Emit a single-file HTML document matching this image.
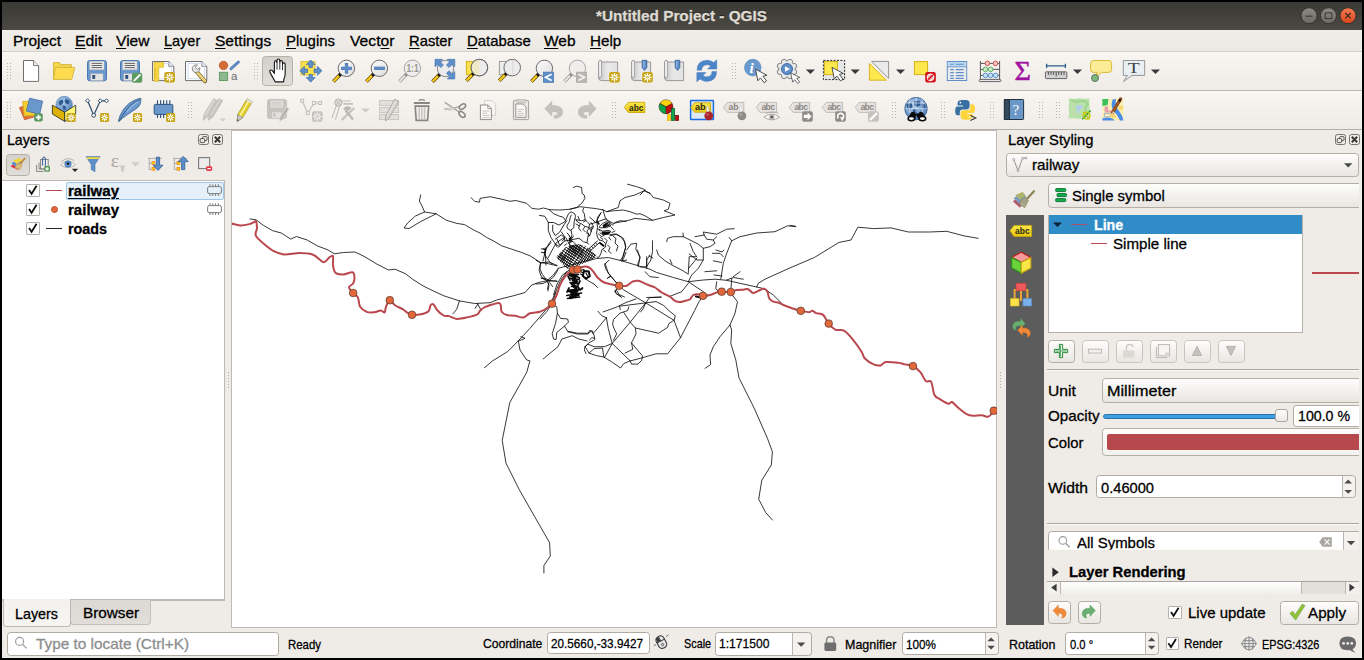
<!DOCTYPE html>
<html><head><meta charset="utf-8"><title>QGIS</title>
<style>
html,body{margin:0;padding:0}
body{width:1364px;height:660px;background:#000;position:relative;overflow:hidden;font-family:"Liberation Sans",sans-serif}
.a{position:absolute;box-sizing:border-box}
.t{position:absolute;white-space:pre;transform-origin:0 0;display:inline-block;-webkit-text-stroke:0.28px currentColor}
.t u{text-decoration:underline;text-underline-offset:1.6px;text-decoration-thickness:1.4px}
svg{position:absolute;overflow:visible}
.btn{border:1px solid #b3aea6;border-radius:3.5px;background:linear-gradient(#fdfdfc,#f1efec 60%,#e9e6e2)}
.inp{border:1px solid #b0aba3;border-radius:3.5px;background:#fff}
.cb{border:1px solid #b7b3ac;background:#fff;border-radius:1px}
.hd{width:3px;background-image:radial-gradient(circle,#b9b5ae 0.7px,transparent 0.9px);background-size:3px 3px}

</style></head>
<body>
<!-- window -->
<div class="a" style="left:2px;top:2px;width:1360px;height:656px;background:#efebe7"></div>
<!-- title bar -->
<div class="a" style="left:2px;top:2px;width:1360px;height:28px;background:linear-gradient(#3b3a36,#403f3a 40%,#4c4a44)"></div>
<svg style="left:1298px;top:5px" width="62" height="22" viewBox="0 0 62 22">
 <defs><linearGradient id="gb" x1="0" y1="0" x2="0" y2="1"><stop offset="0" stop-color="#8c8a82"/><stop offset="1" stop-color="#6b6962"/></linearGradient>
 <linearGradient id="gr" x1="0" y1="0" x2="0" y2="1"><stop offset="0" stop-color="#f37b52"/><stop offset="1" stop-color="#d9451b"/></linearGradient></defs>
 <circle cx="11" cy="10.7" r="8" fill="url(#gb)" stroke="#33322e" stroke-width="1"/>
 <circle cx="30.5" cy="10.7" r="8" fill="url(#gb)" stroke="#33322e" stroke-width="1"/>
 <circle cx="50" cy="10.7" r="8" fill="url(#gr)" stroke="#33322e" stroke-width="1"/>
 <path d="M7.6 11.2h6.8" stroke="#3a3934" stroke-width="1.1"/>
 <rect x="27.2" y="7.9" width="6.6" height="5.6" fill="none" stroke="#3a3934" stroke-width="1"/>
 <path d="M47.3 8l5.4 5.4M52.7 8l-5.4 5.4" stroke="#3a2a24" stroke-width="1.2"/>
</svg>
<!-- menubar -->
<div class="a" style="left:2px;top:30px;width:1360px;height:22px;background:linear-gradient(#f1eeea,#ece8e3);border-bottom:1px solid #d3cec7"></div>
<!-- toolbars -->
<div class="a" style="left:2px;top:52px;width:1360px;height:39px;background:linear-gradient(#f9f6f3,#f7f4f0 15%,#efece8);border-bottom:1px solid #bcb7b0"></div>
<div class="a" style="left:2px;top:91px;width:1360px;height:38px;background:linear-gradient(#f9f6f3,#f7f4f0 15%,#efece8)"></div>
<div class="a" style="left:2px;top:129px;width:1360px;height:1px;background:#b4afa8"></div>
<!-- toolbar handles -->
<div class="a hd" style="left:6px;top:62px;height:18px;width:6px"></div>
<div class="a hd" style="left:253px;top:62px;height:18px;width:6px"></div>
<div class="a hd" style="left:731px;top:62px;height:18px;width:6px"></div>
<div class="a hd" style="left:6px;top:101px;height:18px;width:6px"></div>
<div class="a hd" style="left:187px;top:101px;height:18px;width:6px"></div>
<div class="a hd" style="left:611px;top:101px;height:18px;width:6px"></div>
<div class="a hd" style="left:891px;top:101px;height:18px;width:6px"></div>
<div class="a hd" style="left:940px;top:101px;height:18px;width:6px"></div>
<div class="a hd" style="left:989px;top:101px;height:18px;width:6px"></div>
<div class="a hd" style="left:1038px;top:101px;height:18px;width:6px"></div>
<div class="a hd" style="left:1055px;top:101px;height:18px;width:6px"></div>
<!-- pressed pan button -->
<div class="a" style="left:262px;top:56px;width:31px;height:30px;border:1px solid #b5b0a8;border-radius:3.5px;background:linear-gradient(#d4d0cb,#e1deda)"></div>

<!-- LAYERS PANEL -->
<div class="a btn" style="left:198px;top:134px;width:11px;height:11px;border-color:#77746e;border-radius:2.5px;background:#efebe7"></div>
<div class="a btn" style="left:212px;top:134px;width:11px;height:11px;border-color:#77746e;border-radius:2.5px;background:#efebe7"></div>
<div class="a" style="left:6px;top:153.5px;width:24px;height:22px;border:1px solid #b5b0a8;border-radius:3.5px;background:linear-gradient(#d4d0cb,#e1deda)"></div>
<div class="a" style="left:2px;top:180px;width:223px;height:419.5px;background:#fff;border:1px solid #bdb8b1;border-left:none"></div>
<div class="a" style="left:65.5px;top:181.5px;width:158.5px;height:18px;background:#e4f0fa;border:1px solid #9fc6e6;border-radius:2px"></div>
<div class="a cb" style="left:26px;top:183.5px;width:13.5px;height:13px"></div>
<div class="a cb" style="left:26px;top:202.5px;width:13.5px;height:13px"></div>
<div class="a cb" style="left:26px;top:221.5px;width:13.5px;height:13px"></div>
<div class="a" style="left:46px;top:189.5px;width:16px;height:1.9px;background:#b8484e"></div>
<div class="a" style="left:50.5px;top:205.5px;width:7px;height:7px;border-radius:50%;background:#e2673c;border:0.6px solid #b5502c"></div>
<div class="a" style="left:46px;top:228.1px;width:16px;height:1.2px;background:#222"></div>
<!-- tabs -->
<div class="a" style="left:2px;top:599.5px;width:223px;height:1px;background:#bdb8b1"></div>
<div class="a" style="left:70px;top:600px;width:81px;height:24.5px;background:linear-gradient(#dcd8d3,#e1ddd8);border:1px solid #c3beb7;border-top:none;border-radius:0 0 4px 4px"></div>
<div class="a" style="left:2.5px;top:599px;width:68.5px;height:28px;background:linear-gradient(#f3f1ee,#f7f5f2);border:1px solid #bdb8b1;border-top:none;border-radius:0 0 4px 4px"></div>
<!-- locator -->
<div class="a inp" style="left:6.5px;top:631.5px;width:272px;height:24px"></div>

<!-- MAP CANVAS -->
<div class="a" style="left:231px;top:130px;width:766px;height:498px;background:#fff;border:1px solid #bfbab3"></div>
<div class="a hd" style="left:227.3px;top:371px;width:3px;height:18px;background-image:radial-gradient(circle,#b0aca5 0.75px,transparent 0.95px)"></div>
<div class="a hd" style="left:999.3px;top:371px;width:3px;height:18px;background-image:radial-gradient(circle,#b0aca5 0.75px,transparent 0.95px)"></div>

<!-- STATUS BAR widgets -->
<div class="a inp" style="left:546.5px;top:632.3px;width:103px;height:22.2px"></div>
<div class="a inp" style="left:715px;top:631.5px;width:96.5px;height:24px;background:linear-gradient(90deg,#fff 76px,#b9b4ad 76px,#b9b4ad 77px,#f4f2ef 77px)"></div>
<div class="a inp" style="left:901.5px;top:632px;width:97.5px;height:22.5px;background:linear-gradient(90deg,#fff 82px,#b9b4ad 82px,#b9b4ad 83px,#f4f2ef 83px)"></div>
<div class="a inp" style="left:1065px;top:632px;width:93.5px;height:22.5px;background:linear-gradient(90deg,#fff 79.5px,#b9b4ad 79.5px,#b9b4ad 80.5px,#f4f2ef 80.5px)"></div>
<div class="a cb" style="left:1165.5px;top:636.5px;width:13px;height:13px"></div>

<!-- STYLING PANEL -->
<div class="a btn" style="left:1335px;top:134px;width:11px;height:11px;border-color:#77746e;border-radius:2.5px;background:#efebe7"></div>
<div class="a btn" style="left:1349px;top:134px;width:11px;height:11px;border-color:#77746e;border-radius:2.5px;background:#efebe7"></div>
<div class="a btn" style="left:1006px;top:152.5px;width:353px;height:24px"></div>
<div class="a" style="left:1006px;top:215px;width:38px;height:409.5px;background:#5c5c5c"></div>
<!-- clipped scroll area 1047..1359 -->
<div class="a" style="left:1047px;top:180px;width:312px;height:375px;overflow:hidden">
 <div class="a btn" style="left:0.5px;top:3px;width:330px;height:24.5px"></div>
 <div class="a" style="left:0.5px;top:34.5px;width:255.5px;height:118px;background:#fff;border:1px solid #b5b0a9"></div>
 <div class="a" style="left:1.5px;top:35px;width:253.5px;height:18.7px;background:#308cc6"></div>
 <div class="a" style="left:24px;top:43.6px;width:16px;height:1.9px;background:#a8546a"></div>
 <div class="a" style="left:44px;top:62.5px;width:16px;height:1.9px;background:#b8484e"></div>
 <div class="a" style="left:265px;top:92.3px;width:47px;height:2px;background:#b8484e"></div>
 <div class="a btn" style="left:0.5px;top:159.5px;width:27px;height:23.5px"></div>
 <div class="a btn" style="left:34.5px;top:159.5px;width:27px;height:23.5px;border-color:#c9c5be"></div>
 <div class="a btn" style="left:68.5px;top:159.5px;width:27px;height:23.5px;border-color:#c9c5be"></div>
 <div class="a btn" style="left:102.5px;top:159.5px;width:27px;height:23.5px;border-color:#c9c5be"></div>
 <div class="a btn" style="left:136.5px;top:159.5px;width:27px;height:23.5px;border-color:#c9c5be"></div>
 <div class="a btn" style="left:170.5px;top:159.5px;width:27px;height:23.5px;border-color:#c9c5be"></div>
 <div class="a" style="left:0;top:189px;width:312px;height:1px;background:#aaa59e"></div>
 <div class="a" style="left:0;top:190px;width:312px;height:1px;background:#faf9f8"></div>
 <div class="a btn" style="left:54.5px;top:198.3px;width:290px;height:24.5px"></div>
 <!-- slider -->
 <div class="a" style="left:55.5px;top:233.5px;width:180px;height:5px;background:#3f9fe3;border:1px solid #2a72ab;border-radius:2.5px"></div>
 <div class="a" style="left:228px;top:229px;width:12.5px;height:12.5px;border:1px solid #aaa59e;border-radius:3px;background:linear-gradient(#fff,#eceae7)"></div>
 <div class="a inp" style="left:245.5px;top:224.5px;width:90px;height:22.5px"></div>
 <div class="a btn" style="left:54.5px;top:248.3px;width:290px;height:28px;background:linear-gradient(#fdfdfc,#f4f2ef)"></div>
 <div class="a" style="left:59.5px;top:254.4px;width:270px;height:15.5px;background:#b7494d;border-radius:2px"></div>
 <div class="a inp" style="left:48.5px;top:295.3px;width:260.5px;height:23.2px;background:linear-gradient(90deg,#fff 245px,#b9b4ad 245px,#b9b4ad 246px,#f4f2ef 246px)"></div>
 <div class="a" style="left:0;top:343px;width:312px;height:1px;background:#aaa59e"></div>
 <div class="a" style="left:0;top:344px;width:312px;height:1px;background:#faf9f8"></div>
 <div class="a inp" style="left:0.5px;top:350.5px;width:330px;height:30px;border-radius:3.5px 0 0 3.5px;clip-path:inset(0 0 10.7px 0);background:linear-gradient(90deg,#fff 293.5px,#b9b4ad 293.5px,#b9b4ad 294.5px,#f4f2ef 294.5px)"></div>
</div>
<!-- h scrollbar -->
<div class="a" style="left:1047px;top:581px;width:312px;height:13px;background:#e3e0dc"></div>
<div class="a" style="left:1047px;top:580.5px;width:312px;height:1px;background:#aaa59e"></div>
<div class="a" style="left:1060px;top:581.5px;width:241.5px;height:12.5px;background:linear-gradient(#fefefe,#f0eeeb);border-left:1px solid #bcb7b0;border-right:1px solid #bcb7b0"></div>
<div class="a" style="left:1047px;top:581.5px;width:13px;height:12.5px;background:#f3f1ee"></div>
<div class="a" style="left:1345px;top:581.5px;width:14px;height:12.5px;background:#f3f1ee;border-left:1px solid #bcb7b0"></div>
<!-- bottom buttons -->
<div class="a btn" style="left:1047.5px;top:601.3px;width:23.5px;height:22.5px"></div>
<div class="a btn" style="left:1077.5px;top:601.3px;width:23.5px;height:22.5px"></div>
<div class="a cb" style="left:1168px;top:605.5px;width:13.5px;height:13px"></div>
<div class="a btn" style="left:1279.5px;top:600.5px;width:79.5px;height:24px"></div>

<svg style="left:232px;top:131px;overflow:hidden" width="765" height="496" viewBox="232 131 765 496">
<g fill="none" stroke="#0a0a0a" stroke-width="0.82" stroke-linejoin="round" stroke-linecap="round">
<!-- west long road -->
<path d="M250 219 L255.8 219.7 L263.5 225.4 L272.5 230.6 L281.5 233.1 L290.6 239.1 L296.5 236.5 L307.3 240.1 L317.6 246 L327.9 249.9 L334.4 253.8 L343.4 252.5 L355 252 L364 256.3 L376.9 264.1 L388.5 270 L394.9 269.2 L405.3 273.6 L413 279.5 L423.3 286 L433.6 291.1 L443.9 295.8 L459.4 300.9 L474.8 303.5 L490 302.7 L496.7 300 L513.3 295.8 L525 292.5 L531.7 285 L538.3 282.5 L546.7 280.8 L553.3 275 L558.3 268.3"/>
<path d="M459.4 300.9 L456.8 309.2 L452.9 313.8 M477.4 303.5 L481.3 310.5 M478 304 L475 308.5"/>
<!-- NW road with loop -->
<path d="M420.7 195 L419.4 201 L422 206 L424.6 212 L436.2 213.8 L446.5 220.3 L456.8 223.4 L464.5 224.6 L474.8 230.6 L480 233 L486.7 237.5 L493.3 240.8 L501.7 245.8 L511.7 249.2 L521.7 252.5 L530 255.8 L536.7 260 L540.8 262.8 L546.7 263.3 L556.7 265.8"/>
<path d="M424.6 212 L415.6 215.9 L407.8 222.8 L404 228 L409.1 228.5 L420.7 221.5 L436.2 213.8"/>
<!-- north road -->
<path d="M471 197.6 L474.8 201.4 L479.5 202.2 L480 198.4 L490 196.7 L501.7 199.2 L510 201.3 L515.8 200.5 L526.7 203.3 L531.7 208.3 L538.3 209.2 L543.3 208 L550 209.7 L560 210 L570 209.2 L580 206.7 L586.7 207.5 L596.7 208.7 L603.3 210 L606.7 211.7 L613.3 209.2 L618.3 207.5 L620 200.8 L625 197.5 L635 195 L644 190.8 L650 193.3 L653.3 197.5 L663.3 200 L670 203.3 L668.3 209.2 L664.2 210.8 L675 215 L663.3 217.5 L652.5 220.3 L645 215.8 L640 213.7 L636.7 214.2 L630 211.7 L623.3 210 L613.3 210.8 L606.7 211.7"/>
<path d="M627.5 184.2 L636.7 186.7 L644 189.2 L646.7 191.7 L650 193.3 M640 195 L645 190"/>
<path d="M573.3 187.5 L576.7 186.2 L581.7 187.5 L582 193.3 L584.2 195 L585 198.3 L581.7 203.3 L576.7 207.5 L570 209.2"/>
<path d="M606.7 220 L613.3 223.3 L621.7 221.7 L630 220 L635 218.3 L645 219.5 L652.5 220.3"/>
<!-- east arcs -->
<path d="M610 235.8 L616.7 234.2 L623.3 238.3 L625.8 246.7 L623.3 255 L621.7 260.8"/>
<path d="M626.7 250 L630.8 244.2 L636.7 243.3 L635.8 249.2 L640 256.7 L638.3 266.7"/>
<path d="M650 255 L646.7 260 L646.7 268.3"/>
<!-- main E-W road through town -->
<path d="M558.3 268.3 L566.7 266 L580 262.5 L596.7 258.5 L608.3 257.5 L621.7 260.8 L638.3 265.8 L650 269.2 L656.7 272.5 L673.3 277.5 L688.3 281.7 L703.3 280 L715 279.2 L726.7 280.3 L740 283.3 L756.7 287 L764.2 288.7 L773.3 295 L781.7 303.3"/>
<path d="M756.7 287 L758.3 283.3 L765 279.2 L790 267.9 L814.4 257.5 L838.8 242.5 L851 240 L857.9 227.2 L873.6 228.6 L891 227.9 L908.4 232 L929.3 232 L946.7 231.3 L964.2 235.9 L978.1 238.3"/>
<path d="M790 225.4 L795.2 226.1"/>
<!-- NE road -->
<path d="M729.2 237.5 L731.7 240.8 L740 236.7 L756.7 233 L775 231.7 L787.5 225.8 L795.8 226.7"/>
<path d="M731.7 240.8 L726.7 253.3 L723.3 263.3 L720.8 279"/>
<path d="M666.7 241.7 L667.5 238.3 L673.3 236.7 L683.3 236.7 L690 240 L698.3 244.2 L703.3 248.3 L703.3 260 L698.3 268.3 L691.7 275 L688.3 281.7"/>
<path d="M683.3 236.7 L683 233 M695 236.7 L704.2 235 L703.3 232 L716.7 234.2 L726.7 229.2 L734.2 228.7"/>
<path d="M704.2 235 L706.7 239.2 L713.3 240 L715 243.3 L710 246.7 L703.3 248.3 M713.3 240 L716.7 236.7"/>
<path d="M690 243.3 L693.3 251.7 L696.7 256.7 L689.2 256.7 L688.3 273.3 M689.2 254 L697 260 L703 260 M689 268 L697 258"/>
<path d="M656.7 250 L658.3 255 L665 260.8 L673.3 265.8 L681.7 270 L688.3 274.2 M670 259.5 L672 264"/>
<path d="M652.5 240.8 L652.5 251.7 L650.8 260 L646.7 266.7 L640 267 M649 256 L653 258"/>
<path d="M645 271.7 L650 276.7 L658.3 277.5"/>
<path d="M712.5 253.3 L720 253.3 L723.3 256.7 M713.3 260.8 L721.7 262.5 M705 271.7 L716.7 270.8 M733.3 276.7 L740 271.7 M726.7 280 L733.3 277.5 L743.3 279.2 M716 250 L722 252 L724 250 M714 275 L722 276"/>
<path d="M716.7 281.7 L715.8 288.3 L718.3 291.7 M731.7 278.3 L730.8 291.7"/>
<!-- roads from stations going south -->
<path d="M688.3 283.3 L681.7 291.7 L670 296.3 M688.3 281.7 L703.3 291.7"/>

<path d="M730.8 293.3 L737.5 301.7 L735 313.3 L730 325 L720 336.7 L713.3 346.7 L710 355 L710.6 364.6 L705 368.4"/>
<path d="M730 325 L731.7 330 L730.8 343.3 L735.8 360 L739 377.9 L754.2 408.2 L767.5 438.5 L772.4 451.8 L771.3 465 L761.8 480.2 L758.7 499.2 L765.6 512.4 L772.4 520"/>
<path d="M646.7 297.5 L661.1 297.1"/>
<!-- big polygons S of town (retraced) -->
<path d="M619.2 285.8 L623.8 290 L645.7 302.9 L674 320.3 L680.5 337.7"/>
<path d="M604.4 357.7 L612.2 343.5 L630.2 322.2 L645.7 302.9 L649.5 297.7 L661.1 297.1"/>
<path d="M594.1 332.5 L606.4 317.7 M603.1 311.9 L610 309.5 L617.3 306.8 L626 302.5 L636 299 M619.9 306.1 L645.7 302.9 M598 311.3 L601.9 315.8 L606.4 317.7 M619.5 306.5 L620.3 309.5"/>
<path d="M606.4 317.7 L608.3 328.7 L612.2 343.5 L621 352 L630.2 360.9"/>
<path d="M628.9 306.8 L627.6 310.6 L619.9 313.2 L613.5 319.6 L612.6 324 L614.1 328.7 L616.7 333.8 L613.5 340.3"/>
<path d="M623.8 312.6 L630.2 322.2 L635.4 328 L647 330.6 L658.6 333.2 L667.6 327.4 L668.9 323.5 L674 320.3"/>
<path d="M645.7 302.9 L656 301.6 L663.7 305.5 L668.9 310.6 L675.3 315.8 L674 320.3 M645.7 302.9 L643 309 L640.5 312"/>
<path d="M635.4 328 L636 333.8 L632.8 340.3 L631.5 342.8 L632.8 349.3 L625.1 353.1"/>
<path d="M631.5 342.8 L637.9 350.6 L642.4 355.7 L641.8 360.2 L637.9 364.1 L631.5 364.1 L630.2 360.9"/>
<path d="M585.1 346.7 L589 353.1 L596.7 355.7 L603.8 357 L612.2 362.2 L620.5 368 L623.8 363.5 L630.2 360.9 L640.5 358.3 L656 353.8 L667.6 353.8 L680.5 337.7 L694.6 310.6 L699.1 301.6 L703 295.8"/>
<path d="M585.1 346.7 L587.7 344.1 L594.1 346.7 L604.4 346.7 L612.2 343.5 M589 353.1 L594.1 348.6 L602.5 348 L603.8 357 M585.1 346.7 L584.3 350 L586 353.5"/>
<path d="M553.3 305 L556.8 306.8 L557.4 313.2 L560.6 318.4 L567.7 319 L568.4 322.2 L564.5 326.1 L567.7 331.2 L577.4 333.2 L587.7 333.2 L591.5 331.2 L594.1 335.1 L594.8 339.6 L589 342.8 L585.1 346.7"/>
<path d="M557.4 313.2 L555.5 323.5 L552.2 333.8 L553.5 339 L556.1 339.6 L556.8 332.5 L564.5 326.1"/>
<path d="M543.2 358.9 L551.6 351.9 L558 346.7 L561.9 339 L572.2 335.7 L578.7 339 L587 340.9"/>
<path d="M567.7 331.8 L577.4 334 L587.7 334 M588.5 333.5 L589.5 330.5 L592.5 331 L593.5 334 M589.5 340 L592 337.5 L594.5 338.5"/>
<path d="M615 291.7 L618.3 295 L621.7 297.5 M619.2 285.8 L615 291.7 M605 263.3 L608.3 273.3 L619.2 285.8 M608 277.5 L610.5 276.5"/>
<path d="M626.7 260 L622.5 260.8 M637.5 250 L640 258 L637.5 265 M646.7 256.7 L646.7 267"/>
<path d="M616.5 290 L619 294.5 L624.5 297"/>
<!-- SW diagonal road -->
<path d="M484.4 367.7 L492.7 360.8 L507.9 351.4 L518.3 340.8 L530 328.3 L540 316.7 L550 305 L555 293.3 L560 281.7 L566.7 271.7"/>
<path d="M540 319 L546.7 311.7 L552 303.7 L556 292 M518.3 340.8 L520 350 L526.7 360 L529.9 360.8 L526.8 372.2 L509.8 402.5 L502.2 440.4 L506 463.2 L519.3 489.7 L534.4 516.2 L549.6 542.7 L550.3 556 L543.9 565.5 L543.9 573"/>
<path d="M520.8 336.7 L525 338.3 L519.2 340.8"/>
<!-- west of town small loops -->
<path d="M540.8 262.8 L539 270 L541 276 L546.7 280.8 M546.7 280.8 L549 285 L548 291 M541 278 L549 281 L556.7 281 M543.3 248.3 L545.5 250 L544 253 M545 248 L546 265 M548 258 L556 243 L565 237 M549.5 262 L552 264"/>
</g>
<g id="town" fill="none" stroke="#0a0a0a" stroke-width="0.85" stroke-linejoin="round" stroke-linecap="round">
<path d="M549.2 209.7 L553.6 213.7 L559.7 216.3 L563.2 217.2 L565 219.8"/>
<path d="M539.5 215.4 L544.8 216.3 L547.4 220.7 L548.3 222.5 L553.6 222.5 L558.8 225.1 L565 221.6 L568.5 213.7 L571.1 211.9 L574.7 213.7 L575.5 216.3 L574.2 221.6 L573.8 227.7 L570.3 230.4 L567.6 228.6 L566.8 226 L569.4 221.6 L570.3 217.2 L571.3 215"/>
<path d="M548.3 222.5 L548.3 230.4 L550.9 237.4 L554.5 242.7 L557.1 247.1"/>
<path d="M552.7 225.1 L552.7 231.2 L555.3 235.6 L559.7 232.1 L563.2 226 L566.8 220.7"/>
<path d="M550.9 240.9 L547.4 246.2 L544.8 253.2 L543 261.1 M541.3 248.8 L545.7 249.7 M541.3 252.3 L545.2 252.8"/>
<path d="M555.3 239.1 L561.5 234.8 L564.1 237.4 L565 240.9 L561.5 243.5 L558.8 247.1"/>
<path d="M565 240.9 L570.3 240 L572 234.8 L571.1 230.4"/>
<path d="M570.3 240 L574.7 239.1 L579 238.3 L583.5 241.8 L587 242.7 L588.7 244.4 M570.3 240 L569.4 245.3 L571.1 247"/>
<path d="M576.4 219.8 L581.7 220.7 L585.2 219.8 L587.8 222.5 L589.6 224.2 L588.7 228.6 L587 231.2 L588.7 233.9 L587.8 237.4 L587 242.7"/>
<path d="M583.5 208.4 L582.6 211 L584.3 213.7 L584.8 217.2 L585.2 219.8"/>
<path d="M589.6 217.2 L595.8 222.5 L601 212.8 M601 212.8 L597.5 217.2 L597 222.5 L597.5 227.7 L596.6 233 L597.5 237.4 L599.3 240"/>
<path d="M589.6 224.2 L595.8 222.5 L602.8 219.8 L606.3 218.9 M592.2 226.8 L590.5 233.9 L588.7 236.5"/>
<path d="M599.3 226.8 L602.8 223.3 L606.3 221.6 L608.9 222.5 L610.7 226 L606.3 227.7 L601 227.7 Z M603.7 225.1 L606.3 222.9"/>
<path stroke-width="1.8" d="M603.5 225.5 L607.5 223.5 M604 227 L609 225"/>
<path d="M602.8 209.3 L605.4 218 L608.9 221.6 L612.5 225.1 L615.1 222.5 L620.4 220.7 L626 221.6"/>
<path d="M599.3 229.5 L602.8 231.2 L608 230.4 L610.7 231.2 L608.9 233.9 L603.7 234.8 L600.1 233"/>
<path stroke-width="1.8" d="M602.5 232.3 L609.5 232.3 M603 233.8 L608 233.5"/>
<path d="M609.8 234.8 L615.1 233.9 L620.4 236.5 L624.8 241.8 L625.6 247.9 L623 256.7 L620.4 260.2 M608.9 237.4 L610.7 240"/>
<path d="M599.3 240 L602.8 240.9 L605.4 243.5 L605.4 247.1 L601.9 249.7 L601 253.2 L599.3 256.7 L597.5 257.6"/>
<path stroke-width="2" d="M600 243 L603.5 245.8"/>
<path d="M587.8 249.7 L597.5 240.9 M589.6 251.5 L599.3 242.7 M589.5 248.2 L591.3 250 M591.5 246.4 L593.3 248.2 M593.5 244.6 L595.3 246.4 M595.5 242.8 L597.3 244.6"/>
<path d="M575.5 219 L577.5 222 L581.7 224 L585 226.5 L583 229.5 L585.5 232 M578 216.5 L579.5 220 M580 224.5 L578.5 228 L581 231 M583.5 222 L586 220.5 M576 224 L579.5 226 M585.5 226.5 L589 227.5 L591.5 231.5 M589.5 229 L592 226.5 M586.5 233 L590 235.5 M591 222.5 L593.5 226 L592.5 229"/>
<path d="M561.5 232 L565 237.4 L562.4 241 M557 239 L559.7 245.3 L562.4 243.5 M566 238 L568.5 242.5 L572.5 241.5 M569 236 L571.8 238.6 L573.5 236 M568.5 243.5 L572 246.5 M573 241.5 L576 244.5 M567 233 L569.5 235.5 M555.5 244 L558.5 246 M564.5 245.5 L567 243.5"/>
<path stroke-width="1.6" d="M569.5 238.5 L571.5 241 M570.6 237.6 L569.6 240.6 M597.4 222 L599 224"/>
<path d="M597.8 228.5 L600 231 M598.5 234 L601.5 236.5 L604 235.5 M604.5 238 L607 240.5 L606 243.5 M611 227 L613.5 229.5 M612 232.5 L615 231 M607.5 245 L610 247.5 L608.5 251 L611 253.5 M603.5 250 L606 252 M613 236 L616 238.5 L615 243 L618 246 L616.5 251 M600.5 237.5 L603 239.5"/>
<!-- west of grid -->
<path d="M536 260.2 L540.4 262.8 L549.2 262 L557.1 265.5 M540.4 262.8 L540 269 L542.2 274.3 L545.7 278.7 L549.2 280.4 L553.6 276.9 L558 269.9"/>
<path d="M536 284 L543 283.5 L549.2 280.4 M541.3 278.2 L545.7 279.1 M549.2 280.4 L557.1 281.3 M549.2 281.3 L547.4 289.2 M550 283 L552.7 286.6"/>
<path d="M550.9 242.6 L547.4 247 L545.7 247.9 L544.8 254.9 L549.2 261.1"/>
<path d="M553.6 294.5 L557.1 284 L562.4 275.2 L569.4 269.9"/>
<path d="M608.9 260.2 L604.5 264.6 L606.3 269.9 L610.7 276 L615.1 281.3 L619 285.7 M610.7 276 L607.2 278.7"/>
<path d="M615.1 290 L616 293.6 L620.4 296.2 M626 252.3 L623.9 257.6 L622.1 261.1"/>
<path d="M585.2 278.7 L590.5 282.2 L594 284 L597.5 287.5"/>
</g>
<clipPath id="gcp"><polygon points="556.2,257 560,252.5 565.5,247.6 571,245.2 578,244.2 585.2,246 591,250.5 597.3,256.6 591,260.2 583,263.2 575,266.5 567.5,268.8 562,263.5"/></clipPath>
<g clip-path="url(#gcp)"><path fill="none" stroke="#0a0a0a" stroke-width="0.95" d="M559.6 226.2 L609.9 258.9 M558.3 228.2 L608.6 260.9 M557.0 230.2 L607.3 262.9 M555.7 232.2 L606.0 264.8 M554.4 234.1 L604.8 266.8 M553.2 236.1 L603.5 268.8 M551.9 238.1 L602.2 270.7 M550.6 240.0 L600.9 272.7 M549.3 242.0 L599.6 274.7 M548.0 244.0 L598.4 276.7 M546.8 246.0 L597.1 278.6 M545.5 247.9 L595.8 280.6 M544.2 249.9 L594.5 282.6 M542.9 251.9 L593.2 284.5 M565.1 225.1 L543.3 258.6 M566.7 226.1 L544.9 259.6 M568.3 227.1 L546.5 260.7 M569.9 228.2 L548.1 261.7 M571.5 229.2 L549.7 262.8 M573.1 230.2 L551.3 263.8 M575.7 232.0 L554.0 265.5 M578.4 233.7 L556.6 267.3 M580.0 234.8 L558.2 268.3 M581.6 235.8 L559.8 269.3 M583.2 236.8 L561.4 270.4 M584.8 237.9 L563.0 271.4 M586.4 238.9 L564.6 272.4 M589.1 240.6 L567.3 274.2 M591.8 242.4 L570.0 275.9 M593.4 243.4 L571.6 277.0 M594.9 244.5 L573.2 278.0 M596.5 245.5 L574.8 279.0 M598.1 246.5 L576.3 280.1 M599.7 247.6 L577.9 281.1 M602.4 249.3 L580.6 282.8 M605.1 251.0 L583.3 284.6 M606.7 252.1 L584.9 285.6 M608.3 253.1 L586.5 286.7"/></g>
<g clip-path="url(#gcp)"><path fill="none" stroke="#0a0a0a" stroke-width="0.8" d="M573.6 242.9 L568.7 250.5 M574.7 243.6 L569.8 251.2 M575.8 244.4 L570.9 251.9 M577.0 245.1 L572.1 252.7 M578.1 245.9 L573.2 253.4 M579.2 246.6 L574.3 254.1 M580.4 247.3 L575.5 254.9 M581.5 248.1 L576.6 255.6 M582.6 248.8 L577.7 256.3 M583.8 249.5 L578.9 257.1 M584.9 250.3 L580.0 257.8 M560.7 253.1 L557.4 258.1 M561.8 253.8 L558.5 258.8 M562.9 254.5 L559.6 259.5 M564.0 255.2 L560.7 260.2 M565.1 255.9 L561.8 260.9 M566.1 256.6 L562.9 261.6"/></g>
<!-- dark blobs south of station -->
<g fill="none" stroke="#0a0a0a" stroke-linecap="round" stroke-linejoin="round">
<path stroke-width="3.4" d="M570.5 275 L575.5 276 L573 279.5 L576.5 281.5 L572 283.5 M573.5 285.5 L576 288 M570 291 L577 290.5 L572 294 L578 294.5 L570.5 297.5"/>
<path stroke-width="1.7" d="M568.5 274 L578.5 274.5 M569 278 L579 279.5 M570 282.5 L578.5 284 M571.5 286.5 L577.5 286 L579 288.5 M567.5 291.5 L582 289 M566.8 295.5 L581.5 293 M567.5 298.5 L579.5 297 M578 285 L580 281 M569 288 L567 292 M580 290 L582.5 288 M568 276 L570 280 M577 276.5 L579.5 278"/>
<path stroke-width="2" d="M584 271 L588.8 271.5 L589.8 276.2 L586 278.7 L582.8 276 Z"/>
<path stroke-width="1.1" d="M586 273 L587.5 276 M581 270.5 L584 269.5 M578 270.5 L582.5 272.5 M580.5 274 L583 275.5"/>
</g>
<!-- railway -->
<path fill="none" stroke="#b8484e" stroke-width="2" stroke-linejoin="round" stroke-linecap="round" d="M232.0 223.6 C233.4 223.9 237.4 225.3 240.3 225.4 C243.2 225.5 246.9 224.7 249.3 224.1 C251.7 223.5 253.4 222.3 254.5 221.8 C255.6 221.3 255.6 220.2 256.0 221.2 C256.4 222.2 257.0 225.6 257.0 228.0 C257.0 230.4 254.7 233.1 255.8 235.7 C256.9 238.3 260.5 240.9 263.5 243.5 C266.5 246.1 270.4 249.4 273.8 251.2 C277.2 253.0 279.8 254.2 284.1 254.5 C288.4 254.8 294.9 253.0 299.6 253.0 C304.3 253.0 309.3 253.5 312.5 254.5 C315.7 255.5 317.0 257.6 318.9 258.9 C320.8 260.2 322.3 262.5 324.0 262.3 C325.7 262.1 327.7 258.6 329.2 257.6 C330.7 256.6 332.4 255.0 333.0 256.3 C333.6 257.6 332.6 262.6 333.0 265.4 C333.4 268.2 334.0 271.6 335.7 273.1 C337.4 274.6 340.6 274.5 343.4 274.4 C346.2 274.3 350.5 271.9 352.4 272.3 C354.2 272.7 354.4 275.1 354.5 277.0 C354.6 278.9 354.1 281.7 353.2 283.4 C352.3 285.1 349.0 285.7 349.0 287.3 C349.0 288.9 351.7 291.3 353.2 293.0 C354.7 294.7 356.9 295.3 358.0 297.6 C359.1 299.9 358.6 304.2 360.0 306.6 C361.4 309.0 364.2 310.9 366.6 311.8 C369.0 312.8 371.9 312.5 374.3 312.3 C376.7 312.1 379.1 310.5 380.8 310.5 C382.5 310.5 383.7 313.1 384.6 312.5 C385.5 311.9 385.1 308.7 386.0 306.6 C386.9 304.6 388.3 300.4 389.8 300.2 C391.3 300.0 392.9 303.8 395.0 305.3 C397.1 306.8 400.6 307.9 402.7 309.2 C404.8 310.5 406.2 312.1 407.8 313.0 C409.4 313.9 409.9 314.6 412.0 314.8 C414.1 315.0 417.9 314.9 420.7 314.3 C423.4 313.7 426.9 312.7 428.5 311.2 C430.1 309.7 429.6 306.4 430.5 305.3 C431.4 304.2 432.4 303.6 433.6 304.5 C434.8 305.4 435.8 308.6 437.5 310.5 C439.2 312.4 442.0 314.7 443.9 315.6 C445.8 316.5 446.9 315.5 449.0 316.1 C451.1 316.7 453.8 318.8 456.8 319.0 C459.8 319.2 463.7 318.2 467.1 317.4 C470.5 316.6 475.2 315.4 477.4 314.3 C479.5 313.2 478.9 311.9 480.0 310.8 C481.1 309.7 482.8 308.3 484.2 307.5 C485.6 306.7 486.8 306.4 488.3 305.8 C489.8 305.2 491.5 304.7 493.3 304.2 C495.1 303.7 497.9 302.7 499.2 303.0 C500.4 303.3 500.4 304.4 500.8 305.8 C501.2 307.2 500.7 310.2 501.7 311.7 C502.7 313.2 504.5 314.3 506.7 315.0 C508.9 315.7 512.2 315.4 515.0 315.8 C517.8 316.2 520.8 317.9 523.3 317.5 C525.8 317.1 527.2 314.3 530.0 313.3 C532.8 312.3 537.2 312.5 540.0 311.7 C542.8 310.9 544.7 309.6 546.7 308.3 C548.7 307.0 550.3 305.9 552.0 303.7 C553.7 301.5 555.4 298.1 556.7 295.0 C558.0 291.9 558.6 288.1 560.0 285.0 C561.4 281.9 563.2 279.1 565.0 276.7 C566.8 274.3 569.1 272.0 570.8 270.8 C572.5 269.6 573.2 270.4 575.3 269.7 C577.4 269.0 581.0 267.1 583.3 266.7 C585.6 266.3 587.5 266.7 589.2 267.5 C590.9 268.3 591.8 269.9 593.3 271.7 C594.8 273.5 596.5 276.5 598.3 278.3 C600.1 280.1 601.7 281.4 604.2 282.5 C606.7 283.6 610.8 284.1 613.3 284.7 C615.8 285.2 617.0 285.6 619.2 285.8 C621.4 286.0 624.5 286.5 626.7 285.8 C628.9 285.1 630.6 282.5 632.5 281.7 C634.4 280.9 635.7 280.2 638.3 280.8 C640.9 281.4 645.5 283.9 648.3 285.0 C651.1 286.1 652.8 286.2 655.0 287.5 C657.2 288.8 659.2 291.0 661.7 292.5 C664.2 294.0 667.8 295.3 670.0 296.7 C672.2 298.1 673.3 299.9 675.0 300.8 C676.7 301.7 678.3 302.0 680.0 302.0 C681.7 302.0 683.3 301.3 685.0 300.8 C686.7 300.3 688.6 300.2 690.0 299.2 C691.4 298.2 691.9 295.8 693.3 295.0 C694.7 294.2 696.7 294.1 698.3 294.2 C699.9 294.3 701.0 295.7 703.0 295.8 C705.0 295.9 707.7 295.6 710.0 295.0 C712.3 294.4 714.8 293.1 716.7 292.5 C718.7 291.9 719.4 291.8 721.7 291.7 C724.1 291.6 728.3 292.3 730.8 292.0 C733.3 291.7 734.6 290.4 736.7 290.0 C738.8 289.6 741.4 289.8 743.3 289.7 C745.2 289.6 746.6 288.6 748.3 289.2 C750.0 289.8 751.3 292.9 753.3 293.0 C755.2 293.1 758.2 290.7 760.0 290.0 C761.8 289.3 763.0 288.4 764.2 288.7 C765.5 289.0 766.7 290.1 767.5 291.7 C768.3 293.3 768.2 296.6 769.2 298.3 C770.2 300.0 771.8 301.0 773.3 301.7 C774.8 302.4 776.6 301.9 778.3 302.5 C780.0 303.1 781.3 304.2 783.3 305.0 C785.2 305.8 787.8 306.7 790.0 307.5 C792.2 308.3 794.9 309.1 796.7 309.7 C798.5 310.2 798.7 310.4 800.8 310.8 C802.9 311.2 807.2 312.2 809.2 312.2 C811.2 312.2 811.5 310.6 812.6 310.8 C813.8 311.0 814.4 312.5 816.1 313.2 C817.9 313.9 821.0 313.2 823.1 314.9 C825.2 316.6 826.7 321.2 828.7 323.6 C830.7 326.1 832.8 328.4 835.3 329.6 C837.8 330.8 841.1 329.0 844.0 330.6 C846.9 332.2 849.8 335.8 852.7 339.3 C855.6 342.8 859.4 348.3 861.4 351.5 C863.4 354.7 862.9 356.4 864.9 358.5 C866.9 360.6 871.0 363.2 873.6 364.4 C876.2 365.5 878.6 365.8 880.6 365.4 C882.6 365.0 882.9 362.4 885.8 362.0 C888.7 361.6 894.8 362.3 898.0 362.7 C901.2 363.1 902.4 363.8 904.9 364.4 C907.4 365.0 910.4 364.8 913.0 366.1 C915.6 367.4 918.5 369.9 920.6 372.4 C922.7 374.9 924.0 379.5 925.8 381.1 C927.5 382.7 929.6 379.5 931.1 381.8 C932.6 384.1 933.0 392.1 934.5 395.0 C936.0 397.9 937.5 397.7 939.8 399.2 C942.1 400.7 946.5 403.3 948.5 403.8 C950.5 404.3 950.3 401.2 952.0 402.0 C953.7 402.8 956.0 406.1 958.9 408.3 C961.8 410.5 965.6 414.1 969.4 415.3 C973.2 416.5 978.4 415.1 981.6 415.3 C984.8 415.5 986.5 417.4 988.5 416.6 C990.5 415.8 992.9 411.7 993.8 410.7"/>
<path fill="none" stroke="#111" stroke-width="2.2" stroke-linecap="round" d="M696 296.5 L701 297.5"/>
<!-- stations -->
<g fill="#e2683c" stroke="#3a2a22" stroke-width="0.6">
<circle cx="353.2" cy="293" r="3.85"/><circle cx="389.8" cy="300.2" r="3.85"/><circle cx="412" cy="314.8" r="3.85"/>
<circle cx="552" cy="303.7" r="3.85"/><circle cx="573" cy="269.8" r="3.85"/><circle cx="577.5" cy="269.4" r="3.85"/>
<circle cx="619.2" cy="285.8" r="3.85"/><circle cx="703" cy="295.8" r="3.85"/><circle cx="721.7" cy="291.7" r="3.85"/>
<circle cx="730.8" cy="292" r="3.85"/><circle cx="800.8" cy="310.8" r="3.85"/><circle cx="828.7" cy="323.6" r="3.85"/>
<circle cx="913" cy="366.1" r="3.85"/><circle cx="993.8" cy="410.7" r="3.85"/>
</g>
</svg>

<svg style="left:0;top:0" width="1364" height="660" viewBox="0 0 1364 660">
<defs>
 <linearGradient id="lens" x1="0" y1="0" x2="1" y2="1"><stop offset="0" stop-color="#fdfdfd"/><stop offset="1" stop-color="#dcdcdc"/></linearGradient>
 <linearGradient id="scr" x1="0" y1="0" x2="1" y2="0"><stop offset="0" stop-color="#c9c9c9"/><stop offset="0.5" stop-color="#e9e9e9"/><stop offset="1" stop-color="#e2e2e2"/></linearGradient>
 <linearGradient id="ylw" x1="0" y1="0" x2="0" y2="1"><stop offset="0" stop-color="#fbe84a"/><stop offset="1" stop-color="#e8c80e"/></linearGradient>
 <radialGradient id="glb" cx="0.4" cy="0.35" r="0.7"><stop offset="0" stop-color="#b4d0ee"/><stop offset="1" stop-color="#4f7fb8"/></radialGradient>
 <!-- magnifier: lens centre at (0,0) -->
 <g id="mag"><path d="M-6.2 6.2 L-13 13.2" stroke="#4a3c00" stroke-width="3.6" stroke-linecap="butt"/><path d="M-6.6 6.6 L-12.8 13" stroke="#f6c61c" stroke-width="2.4"/><circle cx="-6.3" cy="6.4" r="1.7" fill="#111"/><circle r="8.2" fill="url(#lens)" stroke="#6a6a6a" stroke-width="1"/></g>
 <g id="magG"><path d="M-6.2 6.2 L-13 13.2" stroke="#9a9a9a" stroke-width="3.4"/><path d="M-6.6 6.6 L-12.8 13" stroke="#e6e6e6" stroke-width="2"/><circle cx="-6.3" cy="6.4" r="1.6" fill="#8a8a8a"/><circle r="8.2" fill="#f0eeec" stroke="#a5a5a5" stroke-width="1"/></g>
 <!-- star badge 10.6 square at 0,0 -->
 <g id="star"><rect x="0" y="0" width="10.6" height="10.6" rx="2" fill="#c7a414"/><g stroke="#fff" stroke-width="1.3" stroke-linecap="round"><path d="M5.3 1.6V9M1.6 5.3H9M2.7 2.7l5.2 5.2M7.9 2.7l-5.2 5.2"/></g><circle cx="5.3" cy="5.3" r="1.2" fill="#c7a414"/><circle cx="5.3" cy="5.3" r="0.5" fill="#fff"/></g>
 <g id="starG"><rect x="0" y="0" width="10.6" height="10.6" rx="2" fill="#c6c2be"/><g stroke="#f3f1ef" stroke-width="1.3" stroke-linecap="round"><path d="M5.3 1.6V9M1.6 5.3H9M2.7 2.7l5.2 5.2M7.9 2.7l-5.2 5.2"/></g><circle cx="5.3" cy="5.3" r="1.2" fill="#c6c2be"/></g>
 <!-- cursor arrow tip at 0,0 -->
 <path id="cur" d="M0 0 L0.6 11.8 L3.6 9.2 L6.6 14.6 L9.2 13.2 L6.3 8 L10.4 7.6 Z" fill="#fff" stroke="#444" stroke-width="0.9" stroke-linejoin="round"/>
 <!-- dropdown arrow centered x at 0, top at 0 -->
 <path id="dd" d="M-4.6 0 H4.6 L0 4.6 Z" fill="#3a3a3a"/>
 <!-- floppy 20x21 at 0,0 -->
 <g id="flop"><rect x="0.5" y="0.5" width="19" height="20.3" rx="2.2" fill="#6b98cc" stroke="#4b79b1"/><rect x="2.6" y="1.2" width="14.4" height="8.6" fill="#ececec" stroke="#b9b9b9" stroke-width="0.5"/><path d="M4.6 3.4h10.4M4.6 5.5h10.4M4.6 7.6h10.4" stroke="#555" stroke-width="0.9"/><rect x="3.8" y="13.8" width="12.2" height="6.6" fill="#e4e4e4" stroke="#b9b9b9" stroke-width="0.5"/><rect x="5.3" y="15" width="2.9" height="3.9" fill="#2e4f7a"/></g>
 <!-- scroll (map) 20x21 -->
 <g id="scroll"><path d="M1 1.3 Q1 0.3 2.2 0.3 Q3.6 0.3 3.6 1.6 V2 H19.6 V20.6 H3.4 Q0.8 20.6 0.6 18 V2 Z" fill="url(#scr)" stroke="#8e8e8e" stroke-width="0.9"/><path d="M3.6 2 V16.8 Q3.4 17.8 1 17.4" fill="none" stroke="#8e8e8e" stroke-width="0.8"/><rect x="1.2" y="1.5" width="1.9" height="15" fill="#efefef"/></g>
 <!-- grey label tag: tip at (0,0) -->
 <g id="tagG"><path d="M0 0 L4 -5 H20.4 V5 H4 Z" fill="#e6e3e0" stroke="#bcb8b4" stroke-width="0.9"/><text x="5.2" y="3" font-family="Liberation Sans" font-weight="700" font-size="8.6" fill="#8b8783" textLength="13.6">abc</text></g>
 <g id="tagGab"><path d="M0 0 L4 -5 H20.4 V5 H4 Z" fill="#e6e3e0" stroke="#bcb8b4" stroke-width="0.9"/><text x="5.2" y="3" font-family="Liberation Sans" font-weight="700" font-size="8.6" fill="#8b8783">ab</text></g>
</defs>

<!-- ===== ROW 1 ===== -->
<!-- new -->
<path d="M23.5 60.5 H33.6 L38.6 65.6 V81.4 H23.5 Z" fill="#fff" stroke="#6e6e6e" stroke-width="1" stroke-linejoin="round"/><path d="M33.6 60.5 V65.6 H38.6" fill="#eee" stroke="#6e6e6e" stroke-width="0.9" stroke-linejoin="round"/>
<!-- open -->
<path d="M53.4 79.4 V62.6 H59.6 L60.6 64.6 H71.4 V67.4" fill="#f6d64a" stroke="#d1b43a" stroke-width="0.9"/><path d="M53.4 79.4 L55.6 67.4 H74.8 L71.8 79.4 Z" fill="#fddc4f" stroke="#d1b43a" stroke-width="0.9" stroke-linejoin="round"/>
<!-- save, save as -->
<use href="#flop" x="87" y="60"/>
<use href="#flop" x="120" y="60"/>
<rect x="132" y="72.8" width="10.2" height="10" rx="2" fill="#5b9a5e"/><path d="M134.4 80.4 L139.8 75" stroke="#fff" stroke-width="2" stroke-linecap="round"/>
<!-- new layout -->
<path d="M152.5 61.5 H168.8 L173.8 66.4 V80.6 H152.5 Z" fill="#fff" stroke="#6e6e6e" stroke-width="1" stroke-linejoin="round"/><path d="M168.8 61.5 V66.4 H173.8" fill="#eee" stroke="#6e6e6e" stroke-width="0.8"/>
<rect x="157.5" y="63.5" width="14" height="15.4" fill="none" stroke="#c9d6f2" stroke-width="0.8"/>
<path d="M154 62.4 H163.6 V67.2 H158.8 V81.2 H154 Z" fill="#f8d648" stroke="#d9b524" stroke-width="0.7"/><path d="M154.4 69.5h2.3M154.4 71.5h1.6M154.4 73.5h2.3M154.4 75.5h1.6M154.4 77.5h2.3" stroke="#c79d0c" stroke-width="0.6"/>
<use href="#star" x="164.3" y="72"/>
<!-- layout manager -->
<path d="M185.5 61.5 H201.8 L206.8 66.4 V80.6 H185.5 Z" fill="#fff" stroke="#6e6e6e" stroke-width="1" stroke-linejoin="round"/><path d="M201.8 61.5 V66.4 H206.8" fill="#eee" stroke="#6e6e6e" stroke-width="0.8"/>
<rect x="188" y="63.5" width="16.6" height="15.2" fill="none" stroke="#c9d6f2" stroke-width="0.9"/>
<path d="M196.5 71.5 L205 81.2" stroke="#6d5c1c" stroke-width="4" stroke-linecap="round"/><path d="M196.8 71.8 L204.8 80.9" stroke="#ecd47a" stroke-width="2.6" stroke-linecap="round"/>
<path d="M192.2 67.6 Q193.6 64.2 197.4 64.8 L195.4 67.4 L197.2 69.4 L200 67.6 Q200.4 71 197.2 72.4 Q194.4 73.2 192.8 71 Z" fill="#e4e4e4" stroke="#777" stroke-width="0.8"/>
<!-- style manager -->
<circle cx="223.5" cy="65.4" r="4.2" fill="#d56b35" stroke="#b8582b" stroke-width="0.8"/><path d="M231 68.8 L238.4 62" stroke="#3f6ea6" stroke-width="2.8" stroke-linecap="round"/><path d="M231 68.8 L238.4 62" stroke="#5f8fca" stroke-width="1.8" stroke-linecap="round"/>
<rect x="219.4" y="72.3" width="8.2" height="8.2" fill="#8fb78f" stroke="#5a9b5c" stroke-width="0.9"/><text x="231" y="80.3" font-family="Liberation Sans" font-size="11.5" fill="#6a6a6a">a</text>
<!-- pan hand -->
<path d="M275.2 81.8 L271.2 74.6 Q269.4 71.6 269.8 70.6 Q270.6 69.4 272.4 70.6 L274.4 73.4 V62.4 Q274.4 60.8 275.7 60.8 Q277 60.8 277 62.4 V60.6 Q277 59 278.4 59 Q279.8 59 279.8 60.6 V62 Q279.8 60.6 281.1 60.6 Q282.5 60.6 282.5 62.2 V64 Q282.6 62.8 283.9 62.8 Q285.2 62.8 285.2 64.4 V72 Q285.4 76.6 284 78.6 L283.6 81.8 Z" fill="#fff" stroke="#1a1a1a" stroke-width="1.15" stroke-linejoin="round"/>
<path d="M277 62.4 V69.6 M279.8 62 V69.6 M282.5 64 V70" stroke="#1a1a1a" stroke-width="0.9" fill="none"/>
<!-- pan to selection -->
<rect x="301" y="61.6" width="14" height="13.3" fill="#fbe34d" stroke="#d9b92c" stroke-width="0.9"/>
<g fill="#5f8fca" stroke="#3f6fa8" stroke-width="0.7" stroke-linejoin="round"><path d="M310.7 60 L315.2 64.6 H312.4 V67.6 H309 V64.6 H306.2 Z"/><path d="M310.7 82.2 L315.2 77.6 H312.4 V74.4 H309 V77.6 H306.2 Z"/><path d="M299.8 70.8 L304.4 66.3 V69.1 H307.6 V72.5 H304.4 V75.3 Z"/><path d="M322 70.8 L317.4 66.3 V69.1 H314 V72.5 H317.4 V75.3 Z"/></g>
<!-- zoom in / out / 1:1 -->
<use href="#mag" x="346.4" y="68.3"/><path d="M341.2 68.3 H351.8 M346.5 63 V73.6" stroke="#3f6fa8" stroke-width="3.2"/><path d="M341.6 68.3 H351.4 M346.5 63.4 V73.2" stroke="#5f8fca" stroke-width="2.2"/>
<use href="#mag" x="379.4" y="68.3"/><path d="M374.2 68.3 H384.8" stroke="#3f6fa8" stroke-width="3.2"/><path d="M374.6 68.3 H384.4" stroke="#5f8fca" stroke-width="2.2"/>
<use href="#magG" x="412.4" y="68.3"/><text x="406.4" y="72.4" font-family="Liberation Sans" font-weight="700" font-size="11" fill="#9a9692" textLength="12.2" lengthAdjust="spacingAndGlyphs">1:1</text>
<!-- zoom full -->

<g transform="translate(445.5 68.5)"><path d="M-6.2 6.2 L-13 13.2" stroke="#4a3c00" stroke-width="3.6"/><path d="M-6.6 6.6 L-12.8 13" stroke="#f6c61c" stroke-width="2.4"/><circle cx="-6.3" cy="6.4" r="1.7" fill="#111"/><circle r="8.2" fill="#ebebeb" stroke="#7a7a7a" stroke-width="0.9"/></g>
<g fill="#5f8fca" stroke="#3f6fa8" stroke-width="0.6"><path d="M435 59.3 H442.6 L440.2 61.8 L443.4 65 L440.8 67.6 L437.6 64.4 L435 66.8 Z"/><path d="M454.8 59.3 H447.2 L449.6 61.8 L446.4 65 L449 67.6 L452.2 64.4 L454.8 66.8 Z"/><path d="M454.8 79 H447.2 L449.6 76.5 L446.4 73.3 L449 70.7 L452.2 73.9 L454.8 71.5 Z"/></g>
<!-- zoom to selection / layer -->
<rect x="466.4" y="61.4" width="12" height="13.4" fill="#fbe34d" stroke="#d4b018" stroke-width="1"/>
<g transform="translate(479.4 67.6)"><path d="M-6.2 6.2 L-13 13.2" stroke="#4a3c00" stroke-width="3.6"/><path d="M-6.6 6.6 L-12.8 13" stroke="#f6c61c" stroke-width="2.4"/><circle cx="-6.3" cy="6.4" r="1.7" fill="#111"/><circle r="8.3" fill="#ececec" stroke="#6a6a6a"/><path d="M0 -8.2 A8.2 8.2 0 0 0 0 8.2 Z" fill="#eee9c8"/><circle r="8.3" fill="none" stroke="#6a6a6a"/></g>
<rect x="499.4" y="61.4" width="12" height="13.4" fill="#ececec" stroke="#9a9a9a" stroke-width="1"/>
<g transform="translate(512.2 67.6)"><path d="M-6.2 6.2 L-13 13.2" stroke="#4a3c00" stroke-width="3.6"/><path d="M-6.6 6.6 L-12.8 13" stroke="#f6c61c" stroke-width="2.4"/><circle cx="-6.3" cy="6.4" r="1.7" fill="#111"/><circle r="8.3" fill="#ececec" stroke="#6a6a6a"/><path d="M0.6 -8 V8" stroke="#d0d0d0" stroke-width="0.8"/></g>
<!-- zoom last / next -->
<use href="#mag" x="544.4" y="68.3"/><rect x="543.3" y="72.1" width="10.4" height="10.4" fill="#5f8fca" stroke="#3f6fa8" stroke-width="0.6"/><path d="M551.6 74.2 L545.6 77.3 L551.6 80.4" fill="none" stroke="#fff" stroke-width="1.7"/>
<use href="#magG" x="577.4" y="68.3"/><rect x="576.3" y="72.1" width="10.4" height="10.4" fill="#b9b5b1" stroke="#a5a19d" stroke-width="0.6"/><path d="M578.4 74.2 L584.4 77.3 L578.4 80.4" fill="none" stroke="#f5f3f1" stroke-width="1.7"/>
<!-- map views / bookmarks -->
<use href="#scroll" x="598" y="60"/><use href="#star" x="609.2" y="72"/>
<use href="#scroll" x="631" y="60"/><path d="M642.2 60.3 H646.8 V67.6 L644.5 70.4 L642.2 67.6 Z" fill="#5f8fca" stroke="#2e5c94" stroke-width="0.8"/><path d="M643.8 61 V67.6" stroke="#a9c6e8" stroke-width="0.9"/><use href="#star" x="642.2" y="72"/>
<use href="#scroll" x="664" y="60"/><path d="M675.2 60.3 H679.8 V67.6 L677.5 70.4 L675.2 67.6 Z" fill="#5f8fca" stroke="#2e5c94" stroke-width="0.8"/><path d="M676.8 61 V67.6" stroke="#a9c6e8" stroke-width="0.9"/>
<!-- refresh -->
<g fill="#4d86c8" stroke="#3a70b0" stroke-width="0.4" stroke-linejoin="round"><path d="M697 70.2 Q697 60.6 707 60.2 Q711 60.2 713.6 62.6 L716.8 59.8 L716.8 69 H707.6 L710.6 66 Q708.8 64.6 706.8 64.8 Q702 65 701.6 70.2 Z"/><path d="M716.6 71.4 Q716.6 81 706.6 81.4 Q702.6 81.4 700 79 L696.8 81.8 L696.8 72.6 H706 L703 75.6 Q704.8 77 706.8 76.8 Q711.6 76.6 712 71.4 Z"/></g>
<!-- identify -->
<circle cx="752.8" cy="67.6" r="8.3" fill="#6a99cd" stroke="#5383bb" stroke-width="0.6"/><text x="749.6" y="73" font-family="Liberation Serif" font-style="italic" font-weight="700" font-size="15" fill="#fff">i</text>
<use href="#cur" x="755.6" y="69.2" transform="rotate(-8 755.6 69.2)"/>
<!-- run action -->
<g transform="translate(787 69)"><g fill="#e9e9e9" stroke="#777" stroke-width="0.9"><circle r="7.8"/><circle cx="7.02" cy="2.91" r="2.7"/><circle cx="2.91" cy="7.02" r="2.7"/><circle cx="-2.91" cy="7.02" r="2.7"/><circle cx="-7.02" cy="2.91" r="2.7"/><circle cx="-7.02" cy="-2.91" r="2.7"/><circle cx="-2.91" cy="-7.02" r="2.7"/><circle cx="2.91" cy="-7.02" r="2.7"/><circle cx="7.02" cy="-2.91" r="2.7"/></g><circle r="7.7" fill="#e9e9e9"/><circle r="5.5" fill="#5f8fca" stroke="#33629b" stroke-width="0.9"/><path d="M-2 -2.8 L3 0 L-2 2.8 Z" fill="#fff"/></g>
<use href="#cur" transform="translate(790.6 72.9) rotate(-10) scale(0.8)"/>
<use href="#dd" x="810.4" y="69.4"/>
<!-- select -->
<rect x="823.4" y="60.4" width="21.2" height="19.2" fill="#e6e6e6" stroke="#111" stroke-width="0.9" stroke-dasharray="2 1.4"/><rect x="824.4" y="61.6" width="13" height="13" fill="#fde84e" stroke="#d4b018" stroke-width="1"/>
<use href="#cur" x="832" y="67.4" transform="rotate(-8 832 67.4)"/>
<use href="#dd" x="855.2" y="69.4"/>
<!-- invert -->
<path d="M871.6 61.4 H888.6 V78.4 Z" fill="#eaeaea" stroke="#8a8a8a" stroke-width="0.9"/><path d="M869.4 63.4 V80.2 H886.4 Z" fill="#fde84e" stroke="#d4b018" stroke-width="0.9"/>
<use href="#dd" x="900.5" y="69.4"/>
<!-- deselect -->
<rect x="914.4" y="61.6" width="13.2" height="13" fill="#fde84e" stroke="#d4b018" stroke-width="1"/><rect x="925.2" y="72.1" width="10.6" height="10.4" rx="2" fill="#d3121c"/><circle cx="930.5" cy="77.3" r="3.4" fill="#f3c0c2" stroke="#fff" stroke-width="0.9"/><path d="M928.2 79.6 L932.8 75" stroke="#d3121c" stroke-width="1.6"/>
<!-- attribute table -->
<rect x="947.3" y="61.5" width="19.4" height="19" fill="#ececec" stroke="#5f8fca" stroke-width="1"/><rect x="947.8" y="62" width="18.4" height="4.6" fill="#bcd9f2"/><path d="M947.3 66.8 H966.7" stroke="#5f8fca" stroke-width="0.9"/><path d="M950.2 64.3h3.6M955.8 64.3h8M950.2 69.6h3.6M955.8 69.6h8M950.2 72.6h3.6M955.8 72.6h8M950.2 75.6h3.6M955.8 75.6h8M950.2 78.4h3.6M955.8 78.4h8" stroke="#5f8fca" stroke-width="1.1"/>
<!-- statistics abacus -->
<path d="M980.4 61 V79.6 M999.6 61 V79.6 M980.4 63.4 H999.6 M980.4 69.4 H999.6 M980.4 75.4 H999.6" stroke="#555" stroke-width="1" fill="none"/><rect x="979.2" y="79.4" width="21.6" height="2.2" rx="1" fill="#e6e6e6" stroke="#555" stroke-width="0.9"/>
<g stroke-width="0.9"><g fill="#f6c6c6" stroke="#d04040"><circle cx="987.4" cy="63.4" r="2.3"/><circle cx="995.5" cy="63.4" r="2.3"/></g><g fill="#c6ecc6" stroke="#58a858"><circle cx="985.4" cy="69.4" r="2.3"/><circle cx="990.6" cy="69.4" r="2.3"/></g><g fill="#c6e0f6" stroke="#4f8fc8"><circle cx="985.4" cy="75.4" r="2.3"/><circle cx="990.5" cy="75.4" r="2.3"/><circle cx="995.6" cy="75.4" r="2.3"/></g></g>
<!-- sigma -->
<text x="1014.6" y="80.4" font-family="Liberation Serif" font-weight="400" font-size="27.5" fill="#a0139e" stroke="#a0139e" stroke-width="0.5" textLength="16.4" lengthAdjust="spacingAndGlyphs">Σ</text>
<!-- measure -->
<path d="M1046.4 65.9 H1065.6 M1046.6 63.8 V68 M1065.4 63.8 V68" stroke="#2e5c8a" stroke-width="1.3"/><rect x="1045.4" y="71.8" width="21.4" height="6.8" rx="0.8" fill="#d2d2d2" stroke="#666" stroke-width="1"/><path d="M1048.4 72v3M1051 72v3M1053.6 72v3M1056.2 72v4.4M1058.8 72v3M1061.4 72v3M1064 72v3" stroke="#555" stroke-width="1"/>
<use href="#dd" x="1077.5" y="69.4"/>
<!-- map tips -->
<path d="M1097.6 72.4 L1095.4 77" stroke="#d4b426" stroke-width="0.9"/><path d="M1093.6 60.5 H1108.6 Q1111.6 60.5 1111.6 63.5 V69.4 Q1111.6 72.4 1108.6 72.4 H1101.4 L1096 77.4 L1097.2 72.4 H1093.6 Q1090.6 72.4 1090.6 69.4 V63.5 Q1090.6 60.5 1093.6 60.5 Z" fill="#fbec95" stroke="#d4b426" stroke-width="0.9"/><circle cx="1095" cy="78" r="3.5" fill="#7cb87e" stroke="#5a6a5a" stroke-width="0.9"/>
<!-- text annotation -->
<path d="M1123.3 60.5 H1144.7 V75.4 H1132 L1123.4 81.6 L1127.4 75.4 H1123.3 Z" fill="#e8f0f5" stroke="#8c8c8c" stroke-width="0.9" stroke-linejoin="round"/><text x="1127.8" y="72.9" font-family="Liberation Serif" font-size="14.5" fill="#444" textLength="12" lengthAdjust="spacingAndGlyphs">T</text>
<use href="#dd" x="1155.5" y="69.4"/>
</svg>

<svg style="left:0;top:0" width="1364" height="660" viewBox="0 0 1364 660">
<!-- ===== ROW 2 ===== -->
<!-- data source manager -->
<path d="M19.4 107.6 L32 103.6 L37 116 L24.6 119.8 Z" fill="#e0713a" stroke="#b5562a" stroke-width="0.7"/>
<path d="M22.6 101.4 L35.6 101 L36.4 115.4 L24.2 116 Z" fill="#f5cf2e" stroke="#c9a418" stroke-width="0.7"/>
<path d="M29.6 98.2 L42.6 101.2 L39.6 114.4 L26.4 111 Z" fill="#6b98cc" stroke="#3f6fa8" stroke-width="0.8"/>
<rect x="34.2" y="113.2" width="8.6" height="8.4" rx="1.8" fill="#5b9a5e"/><path d="M38.5 114.8 V120 M35.9 117.4 H41.1" stroke="#fff" stroke-width="1.7"/>
<!-- new geopackage -->
<circle cx="64.2" cy="104.6" r="8.3" fill="url(#glb)" stroke="#4a78b0" stroke-width="0.5"/>
<path d="M58.4 102.4 Q60 99 62.8 99.8 L63.4 102.6 L61 105.6 L59.2 104.8 Z M65.2 99.4 Q68.4 99 69.8 101.6 L68.4 104.6 L65.8 103.6 L64.6 101.2 Z M62.4 105.6 L65.6 106 L66 109.4 L63.4 109.8 Z" fill="#2f5a90"/>
<path d="M52.4 105.2 L64.7 112.2 V121.5 L52.4 114 Z" fill="#dcb004" stroke="#222" stroke-width="0.8" stroke-linejoin="round"/>
<path d="M64.7 112.2 L75.7 105.2 V114 L64.7 121.5 Z" fill="#fdf878" stroke="#222" stroke-width="0.8" stroke-linejoin="round"/>
<use href="#star" x="66.6" y="113" transform="translate(66.6 113) scale(0.86) translate(-66.6 -113)"/>
<!-- new shapefile -->
<path d="M87.6 100.8 L93.7 115.3 L100.3 100.8 H106.5" fill="none" stroke="#2c4a66" stroke-width="1.2"/>
<g fill="#fff" stroke="#2c4a66" stroke-width="1"><path d="M87.6 98.8 l2 2 l-2 2 l-2 -2 Z"/><path d="M100.3 98.8 l2 2 l-2 2 l-2 -2 Z"/><path d="M106.5 98.8 l2 2 l-2 2 l-2 -2 Z"/><circle cx="93.7" cy="115.3" r="1.9"/></g>
<use href="#star" x="100" y="113" transform="translate(100 113) scale(0.86) translate(-100 -113)"/>
<!-- spatialite feather -->
<path d="M140.8 98.2 Q141.6 105 136.6 108.4 Q131 112 126 115.6 Q122.4 118 119.2 121.4 L118.4 121.2 Q119.4 115.6 123.2 109.8 Q127.4 103.6 133.6 100.6 Q137.4 98.8 140.8 98.2 Z" fill="#6d9bd0" stroke="#3a5f8a" stroke-width="0.8" stroke-linejoin="round"/><path d="M139.6 99.6 Q130 104 124.8 112 Q121.2 117.4 119 121" fill="none" stroke="#2f5784" stroke-width="0.9"/><path d="M137.8 101.6 Q131 105.6 127 111.8" fill="none" stroke="#b6d2f0" stroke-width="0.9"/>
<use href="#star" x="133" y="113" transform="translate(133 113) scale(0.86) translate(-133 -113)"/>
<!-- temp scratch chip -->
<path d="M157.5 100.2V104.4M160.6 100.2V104.4M163.6 100.2V104.4M166.7 100.2V104.4M169.8 100.2V104.4M157.5 114.4V118M160.6 114.4V118M163.6 114.4V118" stroke="#2c4f7c" stroke-width="1.1"/><rect x="154.2" y="104.4" width="18.6" height="10" rx="1.2" fill="#6b98cc" stroke="#2c4f7c" stroke-width="1"/>
<use href="#star" x="166" y="113" transform="translate(166 113) scale(0.86) translate(-166 -113)"/>
<!-- current edits (grey pencils) -->
<g stroke="#b4b0ac" stroke-width="0.5"><path d="M213.6 98.4 L217.6 100.6 L207.8 117 L203 120.4 L203.8 114.6 Z" fill="#cdcac6"/><path d="M218.8 98.4 L222.8 100.6 L213 117 L208.2 120.4 L209 114.6 Z" fill="#c8c5c1"/></g><path d="M214.4 99.6 L205.4 115 M219.8 99.6 L210.6 115" stroke="#e6e3e0" stroke-width="0.9"/><path d="M219.6 118.6 h6.4 l-3.2 3 Z" fill="#cfccc8"/>
<!-- toggle editing pencil -->
<path d="M247 98.8 L252.4 101.8 L242.8 117.6 L237.2 121.6 L237.6 114.6 Z" fill="#e4d02a" stroke="#9a8c1a" stroke-width="0.6" stroke-linejoin="round"/><path d="M248.6 101.4 L240 115.6" stroke="#fbf5b8" stroke-width="1.3"/><path d="M247 98.8 L252.4 101.8 L251.4 103.4 L246 100.4 Z" fill="#eee" stroke="#aaa" stroke-width="0.4"/><path d="M237.6 114.6 L242.8 117.6 L237.2 121.6 Z" fill="#c9c9c9" stroke="#777" stroke-width="0.5"/><path d="M237.2 121.6 L237.4 119.2 L239.2 120.2 Z" fill="#555"/>
<!-- save edits (grey) -->
<rect x="267.4" y="99.4" width="19.2" height="19.2" rx="2.2" fill="#c6c2be" stroke="#bab6b2" stroke-width="0.6"/><rect x="270.6" y="100.6" width="12.6" height="7" fill="#e2dfdc"/><path d="M272 102.4h9.8M272 104h9.8M272 105.8h9.8" stroke="#c6c2be" stroke-width="0.7"/><rect x="272" y="112.2" width="9.6" height="6" fill="#e2dfdc"/><rect x="273.2" y="113.2" width="2.2" height="3.6" fill="#c6c2be"/>
<path d="M286.4 107 L289.2 108.6 L282.8 119.4 L279.6 121.6 L279.8 117.6 Z" fill="#b5b1ad" stroke="#e8e5e2" stroke-width="0.6"/>
<!-- add feature (grey) -->
<path d="M302.1 100.8 L307.8 113.1 L314 103 H320.1" fill="none" stroke="#c2beba" stroke-width="1.2"/><g fill="#f3f1ef" stroke="#c2beba" stroke-width="1"><rect x="300.6" y="99.3" width="3" height="3"/><rect x="306.3" y="111.6" width="3" height="3"/><rect x="312.5" y="101.5" width="3" height="3"/><rect x="318.6" y="101.5" width="3" height="3"/></g>
<use href="#starG" x="312" y="111.2"/>
<!-- vertex tool (grey) -->
<circle cx="338.3" cy="102.6" r="3.6" fill="#e2dfdc" stroke="#b5b1ad" stroke-width="1"/><path d="M336 100.2l4.6 4.8M340.6 100.2l-4.6 4.8" stroke="#b5b1ad" stroke-width="0.9"/><path d="M336.2 106 L332 118 M339.6 106 L335.4 119.6" stroke="#b5b1ad" stroke-width="0.9"/><path d="M341.4 101 H351" stroke="#b5b1ad" stroke-width="0.8"/><path d="M343.4 103.9 H353" stroke="#c6c2be" stroke-width="1.8"/>
<path d="M342.4 119.4 L353.6 108.6" stroke="#c9c6c2" stroke-width="2.4" stroke-linecap="round"/><path d="M344 109.4 Q347 106.6 349.6 108 L346.2 111.2 L353 119.6" fill="none" stroke="#bcb8b4" stroke-width="2.4"/>
<path d="M361 108.4 h9 l-4.5 4.4 Z" fill="#cfccc8"/>
<!-- modify attributes (grey) -->
<g fill="#e2dfdc" stroke="#c6c2be" stroke-width="0.9"><rect x="379.4" y="100.6" width="19.2" height="5"/><rect x="379.4" y="107.6" width="19.2" height="5"/><rect x="379.4" y="114.6" width="19.2" height="5"/></g>
<path d="M394.6 99.2 L398.8 101.4 L389.2 118 L385.4 121 L385.6 116.2 Z" fill="#d6d3cf" stroke="#a5a19d" stroke-width="0.8" stroke-linejoin="round"/><path d="M395.4 101.4 L387.2 116" stroke="#efedeb" stroke-width="0.9"/>
<!-- delete (grey trash) -->
<path d="M418.6 100.6 Q421.8 98.6 425 100.6" fill="none" stroke="#8a8580" stroke-width="1.2"/><path d="M413.8 103 H429.8" stroke="#8a8580" stroke-width="2"/><path d="M415.2 106.2 H428.6 L427.6 120.4 H416.2 Z" fill="#f3f1ef" stroke="#8a8580" stroke-width="1.7" stroke-linejoin="miter"/><path d="M419.2 107.4 V119 M421.9 107.4 V119 M424.6 107.4 V119" stroke="#c6c2be" stroke-width="1.5"/>
<!-- cut (grey scissors) -->
<path d="M444.8 102.4 L460.2 112.6 M444.4 109 Q452 109.4 459.4 106.6" fill="none" stroke="#aaa6a2" stroke-width="1.3"/><path d="M444.4 109 L452 107.4 L456 108.6 L450 110.4 Z" fill="#d9d6d2" stroke="#bcb8b4" stroke-width="0.5"/>
<ellipse cx="462.4" cy="106.6" rx="3.6" ry="2.2" transform="rotate(-35 462.4 106.6)" fill="none" stroke="#8a8682" stroke-width="1.5"/><ellipse cx="462" cy="114.4" rx="3.6" ry="2.2" transform="rotate(40 462 114.4)" fill="none" stroke="#8a8682" stroke-width="1.5"/>
<!-- copy (grey) -->
<path d="M484.6 100.6 H492 L495.6 104.2 V115.2 H484.6 Z" fill="#f6f5f3" stroke="#cfccc8" stroke-width="0.9"/><path d="M480.4 105 H487.8 L491.4 108.6 V119.6 H480.4 Z" fill="#fbfaf9" stroke="#918c87" stroke-width="1"/><path d="M487.8 105 V108.6 H491.4" fill="none" stroke="#918c87" stroke-width="0.8"/><path d="M482.2 111h7.4M482.2 113.2h5M482.2 115.4h7.4M482.2 117.6h7.4" stroke="#bcb8b4" stroke-width="0.8"/>
<!-- paste (grey) -->
<rect x="513.4" y="100.4" width="15.2" height="19.2" rx="0.8" fill="#e9e6e3" stroke="#a5a09b" stroke-width="1"/><rect x="517" y="99.4" width="8.2" height="3.6" fill="#d6d3cf" stroke="#bcb8b4" stroke-width="0.6"/><path d="M515.8 104 H523 L526 107 V117.4 H515.8 Z" fill="#fbfaf9" stroke="#918c87" stroke-width="0.9"/><path d="M517.4 109.4h6.6M517.4 111.4h4.4M517.4 113.4h6.6M517.4 115.4h6.6" stroke="#bcb8b4" stroke-width="0.8"/>
<!-- undo / redo (grey) -->
<path d="M544.8 108.7 L551.8 101.2 V105.4 Q562.8 105 562.8 112 Q562.6 118 554.4 118.4 L554 115.8 Q557.4 115.6 557.6 113.2 Q557.4 111.4 551.8 111.8 V116.2 Z" fill="#c4c0bc" stroke="#b8b4b0" stroke-width="0.5" stroke-linejoin="round"/>
<path d="M596.2 108.7 L589.2 101.2 V105.4 Q578.2 105 578.2 112 Q578.4 118 586.6 118.4 L587 115.8 Q583.6 115.6 583.4 113.2 Q583.6 111.4 589.2 111.8 V116.2 Z" fill="#c4c0bc" stroke="#b8b4b0" stroke-width="0.5" stroke-linejoin="round"/>
<!-- label abc -->
<path d="M624.4 107.4 L628.4 102.3 H644.8 V112.5 H628.4 Z" fill="url(#ylw)" stroke="#c9a80a" stroke-width="0.9"/><text x="629" y="110.6" font-family="Liberation Sans" font-weight="700" font-size="9.2" fill="#2a2a1a" textLength="14.4" lengthAdjust="spacingAndGlyphs">abc</text>
<!-- diagram -->
<circle cx="666" cy="106.8" r="6.9" fill="#c00d0d" stroke="#3a1a10" stroke-width="0.7"/><path d="M666 106.8 L660 103.4 A6.9 6.9 0 0 1 672 103.4 Z" fill="#fbd40a"/><path d="M666 106.8 L660 103.4 A6.9 6.9 0 0 0 666 113.7 Z" fill="#0da54a"/><path d="M666 106.8 L660 103.4 M666 106.8 L672 103.4 M666 106.8 V113.7" stroke="#3a1a10" stroke-width="0.6"/>
<rect x="667.4" y="114.4" width="3.2" height="6.2" fill="#fbd40a" stroke="#e8a40a" stroke-width="0.6"/><rect x="671.6" y="108.4" width="3" height="12.2" fill="#0da54a" stroke="#0a5a2a" stroke-width="0.7"/><rect x="675.6" y="115.4" width="3" height="5.2" fill="#c00d0d" stroke="#6a0a0a" stroke-width="0.7"/>
<!-- pin labels (highlighted) -->
<rect x="690.6" y="100.6" width="22.8" height="19" rx="0.6" fill="#dde8f5" stroke="#1a6be0" stroke-width="1.5"/>
<path d="M690.8 107.4 L694.6 102.8 H710.6 V112.2 H694.6 Z" fill="url(#ylw)" stroke="#c9a80a" stroke-width="0.9"/><text x="695" y="110.4" font-family="Liberation Sans" font-weight="700" font-size="9.2" fill="#2a2a1a">ab</text>
<path d="M706.6 107 Q707.6 105.6 708.6 107 L709.4 113 H706.8 Z" fill="#fff" stroke="#9a9a9a" stroke-width="0.5"/><circle cx="708.8" cy="115.8" r="4.4" fill="#a8242a"/><circle cx="707.6" cy="114.4" r="1.6" fill="#c85a5e" opacity="0.7"/>
<!-- pin labels grey -->
<use href="#tagGab" x="723.4" y="107.4"/><path d="M739.8 107 Q740.8 105.6 741.8 107 L742.6 113 H740 Z" fill="#fff" stroke="#bbb" stroke-width="0.5"/><circle cx="741.9" cy="115.8" r="4.4" fill="#8e8a86"/><circle cx="740.8" cy="114.4" r="1.6" fill="#aaa6a2" opacity="0.8"/>
<!-- show/hide labels -->
<use href="#tagG" x="756.2" y="107.4"/><path d="M764 117.2 Q771.6 110.8 779.6 117.2 Q771.6 122.6 764 117.2 Z" fill="#fbfaf9" stroke="#8e8a86" stroke-width="0.7"/><circle cx="771.8" cy="117" r="2.6" fill="#aaa6a2"/><circle cx="771.8" cy="117" r="1.1" fill="#4a4642"/><path d="M765.6 113.6 Q772 110.4 778.6 113.4" fill="none" stroke="#9a9692" stroke-width="0.6"/>
<!-- move label -->
<use href="#tagG" x="789.2" y="107.4"/><rect x="802.2" y="111.2" width="10.6" height="10.5" rx="1.8" fill="#8e8a86"/><path d="M803.8 114.8 H807.6 V112.6 L811.6 116.4 L807.6 120.2 V118 H803.8 Z" fill="#fff"/>
<!-- rotate label -->
<use href="#tagG" x="822.2" y="107.4"/><rect x="835.2" y="111.2" width="10.6" height="10.5" rx="1.8" fill="#8e8a86"/><path d="M838.4 118.4 A3 3 0 1 1 842.6 118.6" fill="none" stroke="#fff" stroke-width="1.6"/><path d="M840 117 L844.2 117.6 L842.2 121.2 Z" fill="#fff"/>
<!-- change label -->
<use href="#tagG" x="855.2" y="107.4"/><rect x="868" y="111.2" width="10.8" height="10.5" rx="1.8" fill="#c6c2be"/><path d="M870.6 119.4 L876.4 113.6" stroke="#fff" stroke-width="2.2" stroke-linecap="round"/>
<!-- metasearch -->
<circle cx="916" cy="108.6" r="11.2" fill="url(#glb)" stroke="#2f5a90" stroke-width="0.9"/>
<path d="M906.4 103.6 L911.6 102.8 L912.6 106.8 L909.6 109.8 L907.2 108.6 Z M914.2 101.2 L919.6 100.8 L920.6 105.2 L916.8 107 L914.4 105.2 Z M921.6 103.6 L925.2 104.4 L925.6 108.8 L922.6 109.2 Z M912.8 109.4 L916.4 109 L917 112.8 L913.6 113.2 Z" fill="#2f5a90"/>
<path d="M904.8 108.6 H927.2 M906.2 103 H925.8 M916 97.4 V112 M910 99.2 Q907.6 108 910.6 114 M922 99.2 Q924.4 108 921.4 114" fill="none" stroke="#e6eef8" stroke-width="0.7" opacity="0.9"/>
<path d="M913.6 111.4 L911 112.4 L907.8 118.2 L915.4 119.2 L916 115 L918.4 119.2 L926 118.2 L922.8 112.4 L920.2 111.4 L918.4 113.4 H915.4 Z" fill="#0a0a0a"/><ellipse cx="911.4" cy="118.6" rx="3.3" ry="2.1" fill="#fff" stroke="#0a0a0a" stroke-width="1.6"/><ellipse cx="922.4" cy="118.6" rx="3.3" ry="2.1" fill="#fff" stroke="#0a0a0a" stroke-width="1.6"/>
<!-- python -->
<path d="M962.4 99.9 Q957.6 99.9 957.6 103 V105.6 H963 V106.6 H956.8 Q955.2 107 955.2 111 Q955.2 115 957.4 115.3 H959.8 V112.2 Q959.8 109.6 962.6 109.4 H967 Q969.6 109.2 969.6 106.8 V103 Q969.6 100 965.6 99.9 Z" fill="#376fa0"/><circle cx="960.4" cy="102.6" r="0.9" fill="#fff"/>
<path d="M967.8 119.7 Q972.6 119.7 972.6 116.6 V114 H967.2 V113 H973.4 Q975 112.6 975 108.6 Q975 104.6 972.8 104.3 H970.4 V107.4 Q970.4 110 967.6 110.2 H963.2 Q960.6 110.4 960.6 112.8 V116.6 Q960.6 119.6 964.6 119.7 Z" fill="#fdd43a"/><circle cx="969.8" cy="117" r="0.9" fill="#fff"/>
<path d="M970.4 115.4 L975.8 118 L970.4 120.6" fill="none" stroke="#333" stroke-width="1.1"/>
<!-- help -->
<rect x="1004.4" y="99.5" width="19.2" height="20" rx="0.8" fill="#6b97c8" stroke="#20303e" stroke-width="1"/><rect x="1004.4" y="99.5" width="5" height="20" fill="#33495c" stroke="#20303e" stroke-width="1"/><text x="1012.6" y="115.2" font-family="Liberation Serif" font-size="15" fill="#fff">?</text>
<!-- osm -->
<path d="M1069 98.6 Q1074 99.4 1079 98.2 Q1084 99 1089.4 98.6 Q1088.6 104 1089.8 109 Q1089 114 1089.6 118.4 Q1084 117.6 1079 118.8 Q1074 117.8 1068.4 118.6 Q1069.6 113 1068.6 108 Q1069.4 103 1069 98.6 Z" fill="#b9e2ab"/><path d="M1076 106 Q1080 104 1083 106.4 Q1082 109 1079 109.6 Q1080 113 1077.4 114 Q1076.6 110 1076 106 Z" fill="#b4cdee"/><path d="M1071 100 Q1076 103 1080 101 Q1085 100 1088 104 Q1084 107 1086 112" fill="none" stroke="#a0d690" stroke-width="2.2"/><path d="M1072 101 Q1075 108 1072.6 116" fill="none" stroke="#d8c8b0" stroke-width="0.6"/>
<path d="M1082.2 119.2 L1090.6 110.6" stroke="#1a9a1a" stroke-width="1.4"/><circle cx="1086.6" cy="115.6" r="3.4" fill="none" stroke="#c8c814" stroke-width="1.5"/><path d="M1083 112 L1089.8 119.4" stroke="#c8c814" stroke-width="1.3"/>
<!-- style map brush -->
<rect x="1102.4" y="99" width="21" height="21.4" fill="#fbeeb4"/><path d="M1102.4 99 H1108.4 L1107.6 105 L1102.4 106 Z" fill="#3cc05a"/><path d="M1112.6 99.4 L1116 99 Q1114.6 106 1119.4 111.6 Q1122.4 115.4 1123.4 120.4 H1120 Q1117.6 114.8 1113.6 111 Q1110.4 105.6 1112.6 99.4 Z" fill="#4a8de8"/><path d="M1102.4 118.4 Q1109 116 1114 119.4 L1114.4 120.4 H1102.4 Z" fill="#4a8de8"/><path d="M1104.6 106.6 H1108 V110.6 H1111.6 V112.6 H1104.6 Z" fill="#e8a0b0"/><path d="M1104.4 113.4 H1110.4 V116.8 H1104.4 Z" fill="none" stroke="#7a9ad0" stroke-width="0.7"/><path d="M1118.4 107 L1122.4 105.6 L1123.4 108.6 L1119.6 110.6 Z" fill="#f3d860"/><path d="M1109.4 114.6 L1113.4 113 L1116.4 117 L1112.4 119 Z" fill="#f6d970"/>
<path d="M1120.6 99 L1112.6 112.4" stroke="#8a4a1e" stroke-width="3.4" stroke-linecap="round"/><path d="M1120 100.2 L1113.4 111.2" stroke="#b8703a" stroke-width="1.2" stroke-dasharray="1 0.8"/><circle cx="1119.8" cy="100.4" r="1.2" fill="#111"/><path d="M1112.8 111 L1114.6 112.4 L1111.8 114.8 Z" fill="#e8d0b8"/>

<!-- ===== LAYERS PANEL ICONS ===== -->
<!-- dock float/close glyphs -->
<g fill="none" stroke="#55524d" stroke-width="1"><rect x="202.6" y="136.6" width="4.4" height="4" rx="0.8"/><rect x="200.2" y="138.6" width="4.4" height="4" rx="0.8" fill="#efebe7"/></g>
<path d="M214.8 136.8 L220.2 142.2 M220.2 136.8 L214.8 142.2" stroke="#3a3835" stroke-width="2"/>
<g fill="none" stroke="#55524d" stroke-width="1"><rect x="1339.6" y="136.6" width="4.4" height="4" rx="0.8"/><rect x="1337.2" y="138.6" width="4.4" height="4" rx="0.8" fill="#efebe7"/></g>
<path d="M1351.8 136.8 L1357.2 142.2 M1357.2 136.8 L1351.8 142.2" stroke="#3a3835" stroke-width="2"/>
<!-- style brush -->
<g id="brush"><path d="M10.6 166.4 L18.6 159 L22 163.6 L17.6 169.8 Z" fill="#e23a3a"/><path d="M11.4 163.4 L18.6 158.4 L22.4 162 L16 167 Z" fill="#5a8fd6"/><path d="M13 160.4 L19.4 158 L22 160.4 L16.6 164 Z" fill="#f5d63a"/><path d="M24.6 158.6 L19.4 164.8" stroke="#c08a3a" stroke-width="1.8" stroke-linecap="round"/><path d="M16.4 164.4 L20 163 L22 165.4 L19.4 170 L15 167.6 Z" fill="#d9b878" stroke="#b8925a" stroke-width="0.5"/></g>
<!-- add group -->
<path d="M36.6 165 V171.4 H43.6 M39 162.6 V169 H47" fill="none" stroke="#7a7a7a" stroke-width="0.9"/><rect x="40.6" y="159.4" width="7.6" height="9.4" fill="#f3f1ef" stroke="#7a7a7a" stroke-width="0.9"/><path d="M42.6 165.6 V159 Q42.6 157 44 157 Q45.4 157 45.4 159 V166.4" fill="none" stroke="#2e5c94" stroke-width="1"/>
<rect x="44.2" y="166" width="5.8" height="5.8" rx="1.2" fill="#5b9a5e"/><circle cx="47.1" cy="168.9" r="1.7" fill="#e6f2e6"/>
<!-- eye -->
<path d="M60.6 164.8 Q68 157.4 75.4 164.8 Q68 170.6 60.6 164.8 Z" fill="#f6f6f6" stroke="#9a9a9a" stroke-width="0.7"/><path d="M61.4 161.4 Q68 156.4 74.2 160.6" fill="none" stroke="#9a9a9a" stroke-width="0.7"/><circle cx="68" cy="164" r="3.3" fill="#5f8fca" stroke="#3f6fa8" stroke-width="0.5"/><circle cx="68" cy="163.6" r="1.2" fill="#111"/>
<path d="M71.8 168.8 h6.4 l-3.2 3.2 Z" fill="#2a2a2a"/>
<!-- filter -->
<path d="M86 156.6 H100 L95 164.4 V171.8 L91.2 169.6 V164.4 Z" fill="#5f8fca" stroke="#4a78b0" stroke-width="0.6" stroke-linejoin="round"/><rect x="86.8" y="157.2" width="12.4" height="1.8" fill="#f5d63a"/>
<!-- epsilon filter grey -->
<text x="110.8" y="167.4" font-family="Liberation Serif" font-size="19.5" fill="#aaa6a2">ε</text><path d="M119 165.4 H126 L124 168 V171.6 H121 V168 Z" fill="#cfccc8"/>
<path d="M131.1 162.2 h8.8 l-4.4 4.4 Z" fill="#cfccc8"/>
<!-- expand all -->
<path d="M148.2 158.4 H161.8 M149.2 158.4 V169.6 M149.2 163.4 H152 M149.2 169.4 H152" fill="none" stroke="#9a9a9a" stroke-width="0.8"/><rect x="152" y="161.6" width="2.8" height="2.8" fill="#fbd40a" stroke="#f08a1a" stroke-width="0.8"/><rect x="152" y="167.4" width="2.8" height="2.8" fill="#fbd40a" stroke="#f08a1a" stroke-width="0.8"/>
<path d="M156.4 157.2 H159.6 V165.2 H163 L158 170.4 L153 165.2 H156.4 Z" fill="#5f8fca" stroke="#2e5c94" stroke-width="0.8" stroke-linejoin="round"/>
<!-- collapse all -->
<path d="M173.3 158.4 H186.9 M174.3 158.4 V169.6 M174.3 163.4 H177 M174.3 169.4 H177" fill="none" stroke="#9a9a9a" stroke-width="0.8"/><rect x="177" y="161.6" width="2.8" height="2.8" fill="#fbd40a" stroke="#f08a1a" stroke-width="0.8"/><rect x="177" y="167.4" width="2.8" height="2.8" fill="#fbd40a" stroke="#f08a1a" stroke-width="0.8"/>
<path d="M181.6 169.6 H184.8 V161.6 H188.2 L183.2 156.4 L178.2 161.6 H181.6 Z" fill="#5f8fca" stroke="#2e5c94" stroke-width="0.8" stroke-linejoin="round"/>
<!-- remove layer -->
<rect x="198.6" y="157.6" width="11" height="11" fill="#ececec" stroke="#7a7a7a" stroke-width="1.1"/><rect x="206" y="166.2" width="6.2" height="4.8" rx="1.4" fill="#e8384a"/><path d="M207.4 168.6 H210.8" stroke="#fff" stroke-width="1.2"/>
<!-- checkmarks -->
<g fill="none" stroke="#111" stroke-width="1.8"><path d="M29 190 L31.6 193.8 L36.6 185.8"/><path d="M29 209 L31.6 212.8 L36.6 204.8"/><path d="M29 228 L31.6 231.8 L36.6 223.8"/><path d="M1168.4 643.2 L1171 647 L1176 639"/><path d="M1171 612 L1173.6 615.8 L1178.6 607.8"/></g>
<!-- memory chip indicator -->
<g id="chipI" fill="none" stroke="#7c7c7c"><rect x="207.6" y="186.6" width="13.8" height="7" rx="1.6" stroke-width="1"/><path d="M210 184.2V186.4M212.8 184.2V186.4M215.6 184.2V186.4M218.4 184.2V186.4M210 193.8V196M212.8 193.8V196M215.6 193.8V196M218.4 193.8V196" stroke-width="1"/></g>
<use href="#chipI" y="19"/>
<!-- locator search icon -->
<circle cx="19.6" cy="641.4" r="4" fill="none" stroke="#9a9a9a" stroke-width="1.1"/><path d="M22.6 644.4 L26.6 648.4" stroke="#9a9a9a" stroke-width="1.3"/>

<!-- ===== STATUS BAR ICONS ===== -->
<g transform="rotate(-28 661 642)"><rect x="657" y="636" width="8.4" height="12.6" rx="3.6" fill="#e6e6e6" stroke="#3a3a3a" stroke-width="1.1"/><path d="M657 641 H665.4 M661.2 636 V641" stroke="#3a3a3a" stroke-width="0.9"/><rect x="657.8" y="636.6" width="3" height="4" fill="#3a3a3a"/><circle cx="661.2" cy="645" r="1.2" fill="none" stroke="#3a3a3a" stroke-width="0.7"/></g><path d="M666 636.6 L668.4 634.8 M653.8 645.6 L656 644.6" stroke="#3a3a3a" stroke-width="0.7"/>
<path d="M797 642.6 h8.4 l-4.2 4.2 Z" fill="#4a4a4a"/>
<path d="M826.6 643 V640.4 Q826.6 636.8 830.3 636.8 Q834 636.8 834 640.4 V643" fill="none" stroke="#8a8a8a" stroke-width="1.5"/><rect x="824.4" y="642.6" width="11.8" height="8.4" rx="1.4" fill="#6e6e6e"/>
<g fill="#4a4a4a"><path d="M987.3 641.2 h7.6 l-3.8 -3.8 Z"/><path d="M987.3 645.8 h7.6 l-3.8 3.8 Z"/><path d="M1147.8 641.2 h7.6 l-3.8 -3.8 Z"/><path d="M1147.8 645.8 h7.6 l-3.8 3.8 Z"/></g>
<!-- epsg icon -->
<g fill="none" stroke="#7a7a7a" stroke-width="0.8"><path d="M1241.4 643.6 L1245 638.6 Q1249 635.6 1253 638.6 L1256.4 643.6 L1253 648.6 Q1249 651.4 1245 648.6 Z" fill="#e6e6e6"/><path d="M1241.4 643.6 H1256.4 M1249 636.4 V650.6 M1243.4 640.6 H1254.6 M1243.4 646.6 H1254.6 M1245.6 638.2 Q1244 643.6 1245.6 649 M1252.4 638.2 Q1254 643.6 1252.4 649"/></g>
<!-- messages -->
<path d="M1347.6 636.6 Q1356 636.6 1356 643.2 Q1356 647.6 1352.4 649.2 L1355.4 653 L1349.4 650 Q1347.6 650.2 1347.6 650.2 Q1339.4 650 1339.4 643.4 Q1339.4 636.6 1347.6 636.6 Z" fill="#6a6a6a"/><g fill="#efebe7"><circle cx="1343.6" cy="643.4" r="1.4"/><circle cx="1347.7" cy="643.4" r="1.4"/><circle cx="1351.8" cy="643.4" r="1.4"/></g>

<!-- ===== STYLING PANEL ICONS ===== -->
<!-- layer combo icon + arrow -->
<path d="M1013.6 159.4 L1018 170.6 L1022.6 158.4 L1026 158" fill="none" stroke="#7a7a7a" stroke-width="0.8"/><g fill="#fff" stroke="#7a7a7a" stroke-width="0.6"><circle cx="1013.6" cy="159.4" r="1"/><circle cx="1018" cy="170.6" r="1"/><circle cx="1022.6" cy="158.4" r="1"/><circle cx="1026" cy="158" r="1"/></g>
<path d="M1344 163.2 h8.4 l-4.2 4.2 Z" fill="#4a4a4a"/>
<!-- sidebar: brush (active), abc, cube, diagram, history -->
<g><path d="M1013 201.4 L1021.6 193 L1026 198.6 L1020 207.8 Z" fill="#b4566a"/><path d="M1013.6 198.2 L1021.8 192.4 L1026.4 197 L1019 203.4 Z" fill="#7d9bc0"/><path d="M1015.4 195 L1022.6 192 L1026 195.4 L1019.6 199.6 Z" fill="#aeb56a"/><path d="M1034 191.2 L1026.4 199.4" stroke="#8c8356" stroke-width="2.2" stroke-linecap="round"/><path d="M1021 199.6 L1025.6 197.4 L1028.4 200.6 L1024.8 207.6 L1019.4 204.4 Z" fill="#a4a184" stroke="#86835f" stroke-width="0.6"/><path d="M1021.4 203 L1025 205.4" stroke="#c4c1a8" stroke-width="0.7"/></g>
<path d="M1010 230.8 L1014 225.4 H1031.6 V236.4 H1014 Z" fill="url(#ylw)" stroke="#c9a80a" stroke-width="0.9"/><text x="1015" y="234.4" font-family="Liberation Sans" font-weight="700" font-size="9.6" fill="#2a2a1a" textLength="14.6" lengthAdjust="spacingAndGlyphs">abc</text>
<path d="M1021.2 252.2 L1030.8 257.4 L1021.2 262.4 L1011.6 257.4 Z" fill="#f49a9a" stroke="#c01a1a" stroke-width="1.1" stroke-linejoin="round"/><path d="M1011.6 257.4 L1021.2 262.4 V273.2 L1011.6 268 Z" fill="#6ad23a" stroke="#2a8a1a" stroke-width="1.1" stroke-linejoin="round"/><path d="M1030.8 257.4 L1021.2 262.4 V273.2 L1030.8 268 Z" fill="#fbe64a" stroke="#c8a80a" stroke-width="1.1" stroke-linejoin="round"/>
<path d="M1014.6 299 V290 H1027.4 V299 M1021 290 V301" fill="none" stroke="#e8a43a" stroke-width="2"/><rect x="1016" y="283.2" width="10" height="7.4" fill="#ee5a5a" stroke="#c03a3a" stroke-width="0.6"/><rect x="1010.4" y="298.6" width="8.6" height="7.4" fill="#fbe24a" stroke="#d8b82a" stroke-width="0.6"/><rect x="1023" y="298.6" width="8.6" height="7.4" fill="#7ab0ea" stroke="#5a90ca" stroke-width="0.6"/>
<path d="M1025.4 323.4 L1020.4 318.2 V321.2 Q1012.4 321 1012.6 326.8 Q1013 330 1016 330.4 Q1015 327.4 1017 326.2 Q1018.4 325.6 1020.4 325.8 V328.6 Z" fill="#6aae72" stroke="#4a8e52" stroke-width="0.4"/>
<path d="M1017.6 330.2 L1022.6 325 V328 Q1030.6 327.8 1030.4 333.6 Q1030 336.8 1027 337.2 Q1028 334.2 1026 333 Q1024.6 332.4 1022.6 332.6 V335.4 Z" fill="#f08a3a" stroke="#d06a1a" stroke-width="0.4"/>
<!-- single symbol icon -->
<g fill="#0db04a" stroke="#0a6a2a" stroke-width="0.9"><rect x="1055.6" y="188.6" width="10.2" height="3" rx="1"/><rect x="1057" y="193.6" width="9.6" height="3" rx="1"/><rect x="1055.6" y="198.6" width="10.2" height="3" rx="1"/></g>
<!-- tree triangles -->
<path d="M1053 222.4 h9 l-4.5 4.6 Z" fill="#0a2236"/>
<path d="M1052.4 567.4 v9.6 l6.4 -4.8 Z" fill="#2a2a2a"/>
<!-- symbol layer buttons -->
<g fill="none" stroke="#2a8a3a" stroke-width="1"><path d="M1059.4 344.4 H1062.6 V349.4 H1067.6 V352.6 H1062.6 V357.6 H1059.4 V352.6 H1054.4 V349.4 H1059.4 Z" fill="#eaf6ea"/><path d="M1060.4 345.4 V356.6 M1055.4 351 H1066.6" stroke="#3a9a4a" stroke-width="0.9"/></g>
<rect x="1088.4" y="349.2" width="13.2" height="3.8" fill="#f3f1ef" stroke="#bcb8b4" stroke-width="1"/>
<path d="M1126.4 350.6 V348 Q1126.4 344.6 1129.8 344.6 Q1132.6 344.6 1133 347" fill="none" stroke="#cfccc8" stroke-width="1.5"/><rect x="1123" y="350.4" width="11.4" height="7.4" rx="1.4" fill="#dcd9d5"/>
<rect x="1158.4" y="344.6" width="11.2" height="11.2" fill="#f6f5f3" stroke="#bcb8b4" stroke-width="1"/><path d="M1156.4 346.6 V357.6 H1167.4" fill="none" stroke="#bcb8b4" stroke-width="1"/><rect x="1165" y="352.4" width="4.2" height="4.2" fill="#dcd9d5"/>
<path d="M1197 346.4 L1201.6 355.4 H1192.4 Z" fill="#c6c2be" stroke="#aaa6a2" stroke-width="0.8"/>
<path d="M1231 355.4 L1235.6 346.4 H1226.4 Z" fill="#c6c2be" stroke="#aaa6a2" stroke-width="0.8"/>
<!-- width spin arrows -->
<g fill="#4a4a4a"><path d="M1344.4 483.4 h7.6 l-3.8 -3.8 Z"/><path d="M1344.4 490 h7.6 l-3.8 3.8 Z"/></g>
<!-- all symbols search + clear + arrow -->
<circle cx="1062.8" cy="540.4" r="3.8" fill="none" stroke="#9a9a9a" stroke-width="1.1"/><path d="M1065.6 543.2 L1069.6 547.2" stroke="#9a9a9a" stroke-width="1.3"/>
<path d="M1319.2 542 L1322.6 537.2 H1331.8 V546.8 H1322.6 Z" fill="#aaa6a2"/><path d="M1324.6 539.4 L1329.6 544.6 M1329.6 539.4 L1324.6 544.6" stroke="#fff" stroke-width="1.1"/>
<path d="M1346.8 541 h8.4 l-4.2 4.2 Z" fill="#4a4a4a"/>
<!-- scrollbar arrows -->
<path d="M1056.6 583.8 V591.4 L1051.2 587.6 Z M1349.4 583.8 V591.4 L1354.8 587.6 Z" fill="#3a3a3a"/>
<!-- undo / redo buttons -->
<path d="M1053 610.6 L1058.4 605 V608.2 Q1066.4 608 1066.2 614 Q1065.8 617.6 1061.6 618.2 Q1063.4 615.2 1061.4 613.8 Q1060.4 613.2 1058.4 613.4 V616.4 Z" fill="#f08a3a" stroke="#d8742a" stroke-width="0.4"/>
<path d="M1095.4 610.6 L1090 605 V608.2 Q1082 608 1082.2 614 Q1082.6 617.6 1086.8 618.2 Q1085 615.2 1087 613.8 Q1088 613.2 1090 613.4 V616.4 Z" fill="#6aae72" stroke="#4a9a58" stroke-width="0.4"/>
<!-- apply check -->
<path d="M1290 613.4 L1292.6 611.2 L1295 615 L1302.2 604.2 L1305 605.6 L1295.6 620 Z" fill="#8fc43a" stroke="#6a9a2a" stroke-width="0.6" stroke-linejoin="round"/>
</svg>

<div id="texts">
<span class="t" style="left:596.00px;top:7.00px;font-size:15px;line-height:17px;font-weight:700;color:#dfdbd2;transform:scaleX(1.0207);text-shadow:0 -1px 0 rgba(0,0,0,0.55);">*Untitled Project - QGIS</span>
<span class="t" style="left:12.70px;top:33.00px;font-size:14.5px;line-height:16px;font-weight:400;color:#000;transform:scaleX(1.0656);">Pro<u>j</u>ect</span>
<span class="t" style="left:74.50px;top:33.00px;font-size:14.5px;line-height:16px;font-weight:400;color:#000;transform:scaleX(1.0880);"><u>E</u>dit</span>
<span class="t" style="left:116.00px;top:33.00px;font-size:14.5px;line-height:16px;font-weight:400;color:#000;transform:scaleX(1.0747);"><u>V</u>iew</span>
<span class="t" style="left:164.30px;top:33.00px;font-size:14.5px;line-height:16px;font-weight:400;color:#000;transform:scaleX(0.9978);"><u>L</u>ayer</span>
<span class="t" style="left:215.00px;top:33.00px;font-size:14.5px;line-height:16px;font-weight:400;color:#000;transform:scaleX(1.0724);"><u>S</u>ettings</span>
<span class="t" style="left:286.30px;top:33.00px;font-size:14.5px;line-height:16px;font-weight:400;color:#000;transform:scaleX(1.0302);"><u>P</u>lugins</span>
<span class="t" style="left:350.30px;top:33.00px;font-size:14.5px;line-height:16px;font-weight:400;color:#000;transform:scaleX(1.0825);">Vect<u>o</u>r</span>
<span class="t" style="left:409.30px;top:33.00px;font-size:14.5px;line-height:16px;font-weight:400;color:#000;transform:scaleX(1.0183);"><u>R</u>aster</span>
<span class="t" style="left:466.80px;top:33.00px;font-size:14.5px;line-height:16px;font-weight:400;color:#000;transform:scaleX(1.0261);"><u>D</u>atabase</span>
<span class="t" style="left:544.00px;top:33.00px;font-size:14.5px;line-height:16px;font-weight:400;color:#000;transform:scaleX(1.0655);"><u>W</u>eb</span>
<span class="t" style="left:590.30px;top:33.00px;font-size:14.5px;line-height:16px;font-weight:400;color:#000;transform:scaleX(1.0460);"><u>H</u>elp</span>
<span class="t" style="left:6.80px;top:132.00px;font-size:14.5px;line-height:16px;font-weight:400;color:#000;transform:scaleX(0.9763);">Layers</span>
<span class="t" style="left:68.30px;top:183.00px;font-size:14.5px;line-height:16px;font-weight:700;color:#000;transform:scaleX(1.0372);text-decoration:underline;text-underline-offset:1.5px;">railway</span>
<span class="t" style="left:68.30px;top:202.00px;font-size:14.5px;line-height:16px;font-weight:700;color:#000;transform:scaleX(1.0372);">railway</span>
<span class="t" style="left:68.30px;top:221.00px;font-size:14.5px;line-height:16px;font-weight:700;color:#000;transform:scaleX(0.9873);">roads</span>
<span class="t" style="left:14.50px;top:606.00px;font-size:14.5px;line-height:16px;font-weight:400;color:#000;transform:scaleX(0.9878);">Layers</span>
<span class="t" style="left:82.50px;top:605.00px;font-size:14.5px;line-height:16px;font-weight:400;color:#000;transform:scaleX(1.0529);">Browser</span>
<span class="t" style="left:35.50px;top:636.00px;font-size:14.5px;line-height:16px;font-weight:400;color:#8d8d8d;transform:scaleX(1.0577);">Type to locate (Ctrl+K)</span>
<span class="t" style="left:287.50px;top:637.00px;font-size:13px;line-height:15px;font-weight:400;color:#000;transform:scaleX(0.8782);">Ready</span>
<span class="t" style="left:482.50px;top:636.00px;font-size:13px;line-height:15px;font-weight:400;color:#000;transform:scaleX(0.9323);">Coordinate</span>
<span class="t" style="left:551.00px;top:636.00px;font-size:13px;line-height:15px;font-weight:400;color:#000;transform:scaleX(0.9025);">20.5660,-33.9427</span>
<span class="t" style="left:683.70px;top:636.00px;font-size:13px;line-height:15px;font-weight:400;color:#000;transform:scaleX(0.8330);">Scale</span>
<span class="t" style="left:719.40px;top:636.00px;font-size:13px;line-height:15px;font-weight:400;color:#000;transform:scaleX(0.9293);">1:171500</span>
<span class="t" style="left:845.40px;top:637.00px;font-size:13px;line-height:15px;font-weight:400;color:#000;transform:scaleX(0.9594);">Magnifier</span>
<span class="t" style="left:906.00px;top:637.00px;font-size:13px;line-height:15px;font-weight:400;color:#000;transform:scaleX(0.9023);">100%</span>
<span class="t" style="left:1008.80px;top:637.00px;font-size:13px;line-height:15px;font-weight:400;color:#000;transform:scaleX(0.9603);">Rotation</span>
<span class="t" style="left:1070.40px;top:637.00px;font-size:13px;line-height:15px;font-weight:400;color:#000;transform:scaleX(0.8628);">0.0 °</span>
<span class="t" style="left:1184.40px;top:636.00px;font-size:13px;line-height:15px;font-weight:400;color:#000;transform:scaleX(0.9005);">Render</span>
<span class="t" style="left:1261.60px;top:637.00px;font-size:13px;line-height:15px;font-weight:400;color:#000;transform:scaleX(0.8360);">EPSG:4326</span>
<span class="t" style="left:1007.50px;top:132.00px;font-size:14.5px;line-height:16px;font-weight:400;color:#000;transform:scaleX(1.0199);">Layer Styling</span>
<span class="t" style="left:1031.50px;top:157.00px;font-size:14.5px;line-height:16px;font-weight:400;color:#000;transform:scaleX(1.0526);">railway</span>
<span class="t" style="left:1072.40px;top:188.00px;font-size:14.5px;line-height:16px;font-weight:400;color:#000;transform:scaleX(1.0281);">Single symbol</span>
<span class="t" style="left:1093.60px;top:217.00px;font-size:14.5px;line-height:16px;font-weight:700;color:#fff;transform:scaleX(0.9761);">Line</span>
<span class="t" style="left:1113.00px;top:236.00px;font-size:14.5px;line-height:16px;font-weight:400;color:#000;transform:scaleX(1.0434);">Simple line</span>
<span class="t" style="left:1047.70px;top:383.00px;font-size:14.5px;line-height:16px;font-weight:400;color:#000;transform:scaleX(1.0776);">Unit</span>
<span class="t" style="left:1106.50px;top:383.00px;font-size:14.5px;line-height:16px;font-weight:400;color:#000;transform:scaleX(1.1172);">Millimeter</span>
<span class="t" style="left:1047.50px;top:408.00px;font-size:14.5px;line-height:16px;font-weight:400;color:#000;transform:scaleX(1.0473);">Opacity</span>
<span class="t" style="left:1298.00px;top:408.00px;font-size:14.5px;line-height:16px;font-weight:400;color:#000;transform:scaleX(0.9771);">100.0 %</span>
<span class="t" style="left:1047.50px;top:435.00px;font-size:14.5px;line-height:16px;font-weight:400;color:#000;transform:scaleX(1.0243);">Color</span>
<span class="t" style="left:1047.50px;top:480.00px;font-size:14.5px;line-height:16px;font-weight:400;color:#000;transform:scaleX(1.0788);">Width</span>
<span class="t" style="left:1100.50px;top:480.00px;font-size:14.5px;line-height:16px;font-weight:400;color:#000;transform:scaleX(1.0110);">0.46000</span>
<span class="t" style="left:1077.00px;top:535.00px;font-size:14.5px;line-height:16px;font-weight:400;color:#000;transform:scaleX(1.0297);clip-path:inset(0 0 1.2px 0);">All Symbols</span>
<span class="t" style="left:1069.40px;top:564.00px;font-size:14.5px;line-height:16px;font-weight:700;color:#000;transform:scaleX(1.0190);">Layer Rendering</span>
<span class="t" style="left:1187.80px;top:605.00px;font-size:14.5px;line-height:16px;font-weight:400;color:#000;transform:scaleX(1.0335);">Live update</span>
<span class="t" style="left:1307.50px;top:605.00px;font-size:14.5px;line-height:16px;font-weight:400;color:#000;transform:scaleX(1.0501);">Apply</span>
</div>
</body></html>
